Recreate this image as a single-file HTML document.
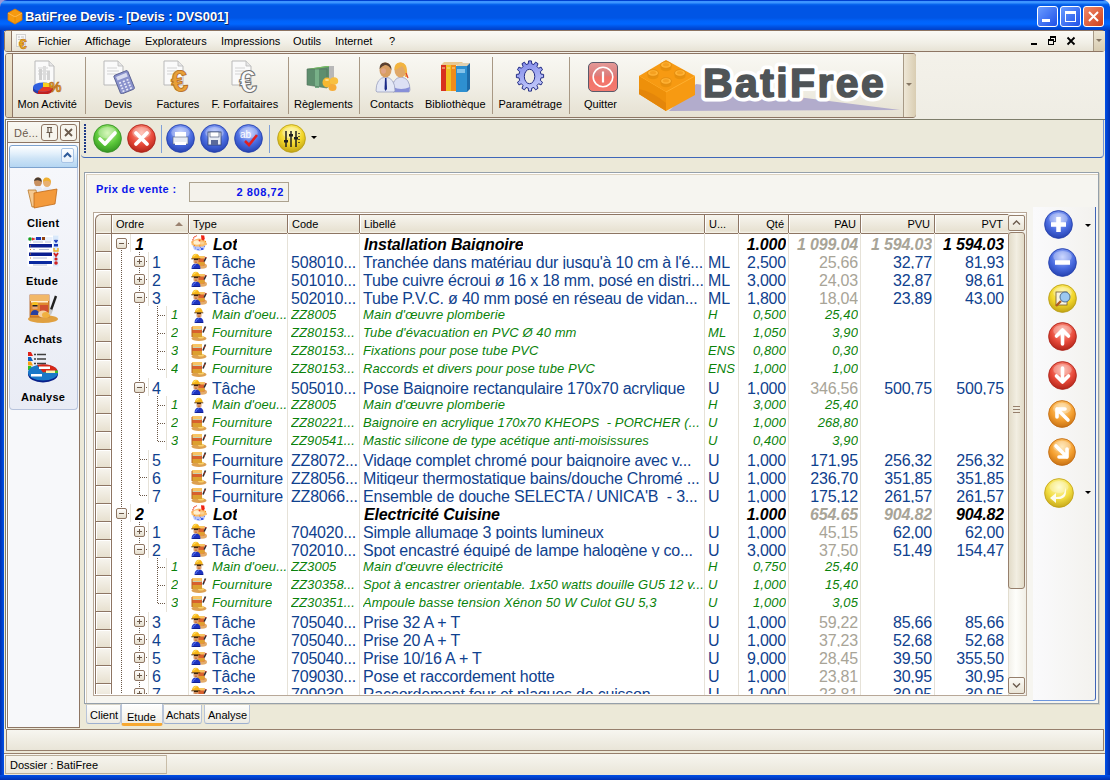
<!DOCTYPE html><html><head><meta charset="utf-8"><style>
*{margin:0;padding:0;box-sizing:border-box}
html,body{width:1110px;height:780px;overflow:hidden;background:#ECE9D8;font-family:"Liberation Sans", sans-serif;}
#root{position:absolute;left:0;top:0;width:1110px;height:780px;overflow:hidden;background:#ECE9D8}
.t11{font-size:11px;line-height:13px;color:#000}
.c{position:absolute;white-space:pre;overflow:hidden;height:17px}
.n15{font-size:16px;line-height:18px;padding-top:2px;letter-spacing:-0.2px}
.i12{font-size:13px;line-height:18px;padding-top:0px;font-style:italic;letter-spacing:0.1px}
.bi15{font-size:16px;line-height:18px;padding-top:2px;font-weight:bold;font-style:italic;letter-spacing:-0.15px}
.blue{color:#0F418E}
.green{color:#0A820A}
.gray{color:#A8A497}
.blk{color:#000}
</style></head><body><div id="root"><div style="position:absolute;left:0px;top:0px;width:1110px;height:780px;background:#0842D6;"></div>
<div style="position:absolute;left:0px;top:0px;width:8px;height:8px;background:#9A98D8;"></div>
<div style="position:absolute;left:1102px;top:0px;width:8px;height:8px;background:#F4F4F8;"></div>
<div style="position:absolute;left:4px;top:52px;width:1101px;height:723px;background:#ECE9D8;"></div>
<div style="position:absolute;left:4px;top:30px;width:1101px;height:89px;background:linear-gradient(180deg,#F5F3EC,#EFEDE4);"></div>
<div style="position:absolute;left:0px;top:0px;width:1110px;height:31px;border-radius:7px 7px 0 0;background:linear-gradient(180deg,#0040D0 0px,#0040D0 1px,#3D95FF 1px,#3D95FF 3px,#0A6AF0 4px,#0055E5 6px,#0055E5 18px,#0063FA 21px,#0066FF 24px,#0050E0 27px,#0040C8 30px);"></div>
<div style="position:absolute;left:1105px;top:30px;width:5px;height:750px;background:linear-gradient(90deg,#0050E8,#0030B0);"></div>
<div style="position:absolute;left:0px;top:30px;width:4px;height:750px;background:linear-gradient(90deg,#0030B0,#0050E8);"></div>
<div style="position:absolute;left:0px;top:775px;width:1110px;height:5px;background:linear-gradient(180deg,#0050E8,#0030B0);"></div>
<svg style="position:absolute;left:6px;top:7px" width="18" height="18" viewBox="0 0 18 18"><path d="M2 6 L9 2 L16 6 L16 13 L9 17 L2 13 Z" fill="#F59A10" stroke="#E07800" stroke-width="0.8"/><path d="M2 6 L9 10 L16 6" fill="none" stroke="#FFB84A" stroke-width="1"/><path d="M9 10 L9 17" stroke="#E08800" stroke-width="0.8"/></svg>
<div class="" style="position:absolute;left:25px;top:9px;white-space:pre;font-size:13px;line-height:16px;font-weight:bold;color:#fff;text-shadow:1px 1px 0 #0A246A;letter-spacing:-0.05px">BatiFree Devis - [Devis : DVS001]</div>
<div style="position:absolute;left:1037px;top:6px;width:21px;height:21px;border:1px solid #fff;border-radius:3px;background:linear-gradient(135deg,#6A9CFF,#1E50E8);overflow:hidden"><div style="position:absolute;left:4px;top:12px;width:8px;height:3px;background:#fff;"></div></div>
<div style="position:absolute;left:1060px;top:6px;width:21px;height:21px;border:1px solid #fff;border-radius:3px;background:linear-gradient(135deg,#6A9CFF,#1E50E8);overflow:hidden"><div style="position:absolute;left:4px;top:4px;width:11px;height:11px;border:1px solid #fff;border-top-width:3px;"></div></div>
<div style="position:absolute;left:1083px;top:6px;width:21px;height:21px;border:1px solid #fff;border-radius:3px;background:linear-gradient(135deg,#F08868,#D0401C);overflow:hidden"><svg style="position:absolute;left:4px;top:4px" width="11" height="11" viewBox="0 0 11 11"><path d="M1 1 L10 10 M10 1 L1 10" stroke="#fff" stroke-width="2"/></svg></div>
<div style="position:absolute;left:4px;top:30px;width:1101px;height:22px;background:linear-gradient(180deg,#FBFAF6,#F1EFE6 60%,#E7E3D5);border:1px solid #8D7563;border-radius:3px;"></div>
<div style="position:absolute;left:5px;top:31px;width:7px;height:20px;background:linear-gradient(180deg,#EFE6D2,#DCCFB2);border-right:1px solid #8D7563;border-radius:2px 0 0 2px;"></div>
<svg style="position:absolute;left:15px;top:33px" width="17" height="17" viewBox="0 0 17 17"><rect x="1.5" y="1.5" width="9" height="12" fill="#F8F8F8" stroke="#C8C8C8" stroke-width="0.8"/><path d="M3 4h2M6 4h3M3 6.5h6" stroke="#B8B8B8" stroke-width="0.8"/><text x="4" y="15.5" font-family="Liberation Sans" font-weight="bold" font-size="14" fill="#EBB020" stroke="#B86A10" stroke-width="0.5">€</text></svg>
<div class="t11" style="position:absolute;left:38px;top:35px;white-space:pre;">Fichier</div>
<div class="t11" style="position:absolute;left:85px;top:35px;white-space:pre;">Affichage</div>
<div class="t11" style="position:absolute;left:145px;top:35px;white-space:pre;">Explorateurs</div>
<div class="t11" style="position:absolute;left:221px;top:35px;white-space:pre;">Impressions</div>
<div class="t11" style="position:absolute;left:293px;top:35px;white-space:pre;">Outils</div>
<div class="t11" style="position:absolute;left:335px;top:35px;white-space:pre;">Internet</div>
<div class="t11" style="position:absolute;left:389px;top:35px;white-space:pre;">?</div>
<div style="position:absolute;left:1031px;top:43px;width:6px;height:2px;background:#000;"></div>
<div style="position:absolute;left:1048px;top:39px;width:6px;height:6px;border:1px solid #000;border-top-width:2px;background:#F0EEE6"></div>
<div style="position:absolute;left:1050px;top:36px;width:6px;height:6px;border:1px solid #000;border-top-width:2px;"></div>
<div style="position:absolute;left:1048px;top:39px;width:6px;height:6px;border:1px solid #000;border-top-width:2px;background:#F0EEE6"></div>
<svg style="position:absolute;left:1066px;top:36px" width="10" height="10" viewBox="0 0 10 10"><path d="M1.5 1.5 L8.5 8.5 M8.5 1.5 L1.5 8.5" stroke="#000" stroke-width="1.8"/></svg>
<div style="position:absolute;left:1093px;top:31px;width:12px;height:20px;background:linear-gradient(180deg,#EDE6D4,#D7CBB0);border-left:1px solid #A79A86;"></div>
<svg style="position:absolute;left:1095px;top:38px" width="8" height="6" viewBox="0 0 8 6"><path d="M1 1 L7 1 L4 4 Z" fill="#857663"/></svg>
<div style="position:absolute;left:5px;top:53px;width:911px;height:65px;background:linear-gradient(180deg,#F9F8F3,#F1EFE6 50%,#E6E1D2);border:1px solid #8D7563;border-radius:3px;"></div>
<div style="position:absolute;left:6px;top:54px;width:7px;height:63px;background:linear-gradient(180deg,#EFE6D2,#DCCFB2);border-right:1px solid #8D7563;border-radius:2px 0 0 2px;"></div>
<div style="position:absolute;left:903px;top:54px;width:13px;height:63px;background:linear-gradient(90deg,#EEE7D6,#D9CDB2);border-left:1px solid #A79A86;border-radius:0 3px 3px 0;"></div>
<svg style="position:absolute;left:905px;top:82px" width="8" height="6" viewBox="0 0 8 6"><path d="M1 1 L7 1 L4 4 Z" fill="#857663"/></svg>
<div style="position:absolute;left:85px;top:57px;width:1px;height:57px;background:#A89884;"></div>
<div style="position:absolute;left:288px;top:57px;width:1px;height:57px;background:#A89884;"></div>
<div style="position:absolute;left:359px;top:57px;width:1px;height:57px;background:#A89884;"></div>
<div style="position:absolute;left:492px;top:57px;width:1px;height:57px;background:#A89884;"></div>
<div style="position:absolute;left:569px;top:57px;width:1px;height:57px;background:#A89884;"></div>
<div class="t11" style="position:absolute;left:17.5px;top:98px;white-space:pre;">Mon Activité</div>
<div class="t11" style="position:absolute;left:104.5px;top:98px;white-space:pre;">Devis</div>
<div class="t11" style="position:absolute;left:156.5px;top:98px;white-space:pre;">Factures</div>
<div class="t11" style="position:absolute;left:211.5px;top:98px;white-space:pre;">F. Forfaitaires</div>
<div class="t11" style="position:absolute;left:294px;top:98px;white-space:pre;">Règlements</div>
<div class="t11" style="position:absolute;left:370px;top:98px;white-space:pre;">Contacts</div>
<div class="t11" style="position:absolute;left:425px;top:98px;white-space:pre;">Bibliothèque</div>
<div class="t11" style="position:absolute;left:498.5px;top:98px;white-space:pre;">Paramétrage</div>
<div class="t11" style="position:absolute;left:584px;top:98px;white-space:pre;">Quitter</div>
<svg style="position:absolute;left:30px;top:60px" width="34" height="34" viewBox="0 0 34 34"><path d="M5 1 h14 l5 5 v19 h-19 z" fill="#FAFAFA" stroke="#B9B9B9" stroke-width="1"/><path d="M19 1 v5 h5" fill="#E6E6E6" stroke="#B9B9B9" stroke-width="0.8"/><path d="M8 8 h10 M8 11 h12 M8 14 h12" stroke="#D2D2D2" stroke-width="1"/><rect x="9" y="9" width="3" height="11" fill="#D0D0D0"/><rect x="13" y="6" width="3" height="14" fill="#DCDCDC"/><rect x="17" y="11" width="3" height="9" fill="#D4D4D4"/><path d="M3 27 v3 A10 4.5 0 0 0 23 30 v-3Z" fill="#C02020"/><path d="M3 27 v3 A10 4.5 0 0 0 8 33.5 v-3Z" fill="#2040B0"/><ellipse cx="13" cy="27" rx="10" ry="4.5" fill="#3060E0"/><path d="M13 27 L23 27 A10 4.5 0 0 1 8 31Z" fill="#E83A28"/><path d="M13 27 L13 22.5 A10 4.5 0 0 1 23 27 Z" fill="#F8D020"/><text x="19" y="32" font-family="Liberation Sans" font-weight="bold" font-size="14" fill="#E89A30" stroke="#A86010" stroke-width="0.5">%</text></svg>
<svg style="position:absolute;left:101px;top:60px" width="36" height="34" viewBox="0 0 36 34"><path d="M3 1 h14 l5 5 v19 h-19 z" fill="#FAFAFA" stroke="#B9B9B9" stroke-width="1"/><path d="M17 1 v5 h5" fill="#E6E6E6" stroke="#B9B9B9" stroke-width="0.8"/><path d="M6 8 h10 M6 11 h12 M6 14 h12" stroke="#D2D2D2" stroke-width="1"/><g transform="rotate(-22 24 23)"><rect x="16" y="12" width="15" height="20" rx="1.5" fill="#8A92CC" stroke="#50588A" stroke-width="0.8"/><rect x="18" y="14" width="11" height="4" fill="#D8DCF0"/><path d="M18.5 21h2M22.5 21h2M26.5 21h2M18.5 24h2M22.5 24h2M26.5 24h2M18.5 27h2M22.5 27h2M26.5 27h2M18.5 30h2M22.5 30h2M26.5 30h2" stroke="#E8EAF8" stroke-width="1.6"/></g></svg>
<svg style="position:absolute;left:161px;top:60px" width="36" height="34" viewBox="0 0 36 34"><path d="M3 1 h14 l5 5 v19 h-19 z" fill="#FAFAFA" stroke="#B9B9B9" stroke-width="1"/><path d="M17 1 v5 h5" fill="#E6E6E6" stroke="#B9B9B9" stroke-width="0.8"/><path d="M6 8 h10 M6 11 h12 M6 14 h12" stroke="#D2D2D2" stroke-width="1"/><g transform="rotate(-8 22 21)"><text x="10" y="31" font-family="Liberation Sans" font-weight="bold" font-size="30" fill="#E8A038" stroke="#B06818" stroke-width="0.8">€</text></g></svg>
<svg style="position:absolute;left:229px;top:60px" width="36" height="34" viewBox="0 0 36 34"><path d="M3 1 h14 l5 5 v19 h-19 z" fill="#FAFAFA" stroke="#B9B9B9" stroke-width="1"/><path d="M17 1 v5 h5" fill="#E6E6E6" stroke="#B9B9B9" stroke-width="0.8"/><path d="M6 8 h10 M6 11 h12 M6 14 h12" stroke="#D2D2D2" stroke-width="1"/><g transform="rotate(-8 22 21)"><text x="10" y="32" font-family="Liberation Sans" font-weight="bold" font-size="31" fill="#FAFAFA" stroke="#707070" stroke-width="1">€</text></g></svg>
<svg style="position:absolute;left:305px;top:62px" width="36" height="30" viewBox="0 0 36 30"><path d="M2 7 L22 4 L29 4 L29 21 L22 26 L2 23Z" fill="#5E8E6E"/><path d="M2 7 L22 4 L29 4 L10 7Z" fill="#78C060"/><path d="M24 4 L29 4 L29 21 L24 24Z" fill="#B8B8B8"/><rect x="10" y="7" width="4" height="19" fill="#78B088"/><path d="M2 7 h20 v19 l-20 -3z" fill="none" stroke="#50705A" stroke-width="0.6"/><ellipse cx="22" cy="20.5" rx="4.5" ry="5" fill="#F8B830"/><ellipse cx="29" cy="19" rx="4.2" ry="3.8" fill="#F8C040"/><ellipse cx="27.5" cy="25.5" rx="4" ry="3.5" fill="#F6AC38"/><ellipse cx="22" cy="18" rx="2" ry="1" fill="#FFF0B0" opacity="0.7"/></svg>
<svg style="position:absolute;left:375px;top:61px" width="36" height="32" viewBox="0 0 36 32"><path d="M17 30 Q17 17 26 16 Q35 17 35 29 L34 31 L18 31Z" fill="#DCE0F4" stroke="#9096B8" stroke-width="0.7"/><path d="M18 26 Q26 30 35 26 L34 31 L18 31Z" fill="#8890D8"/><ellipse cx="25.5" cy="9" rx="6" ry="7.5" fill="#E0A868"/><path d="M19.5 9 Q19 1 26 1.5 Q32 2 32 10 Q32 14 33 16 L30 16 Q31 9 27 5 Q23 8 19.5 9Z" fill="#F2B440"/><path d="M31 12 L33 17" stroke="#E04030" stroke-width="1.2"/><path d="M1 30 Q1 17 10.5 16 Q20 17 20 30 L19 31 L2 31Z" fill="#E4E8F6" stroke="#9096B8" stroke-width="0.7"/><path d="M10 17 L11.5 17 L12 28 L10.5 30 L9.5 28Z" fill="#1A2A88"/><ellipse cx="10.5" cy="9" rx="6" ry="7.5" fill="#D89E62"/><path d="M4.5 8 Q4.5 1 10.5 1.5 Q16.5 2 16.5 9 Q14 4 10 4 Q7 5 4.5 8Z" fill="#5A4030"/><ellipse cx="8.5" cy="10" rx="2.5" ry="2.8" fill="#E8A8A0" opacity="0.6"/></svg>
<svg style="position:absolute;left:439px;top:60px" width="32" height="34" viewBox="0 0 32 34"><rect x="2" y="5" width="5" height="26" fill="#D8301E"/><rect x="7" y="4" width="5" height="27" fill="#F0C020"/><rect x="12" y="4" width="5" height="27" fill="#F08C1A"/><path d="M2 5 L5 2 L24 2 L21 5 Z" fill="#E8C890"/><rect x="17" y="6" width="11" height="26" fill="#2E90D0"/><path d="M17 6 L21 3 L31 3 L28 6 Z" fill="#E0D0B0"/><path d="M28 6 L31 3 L31 29 L28 32 Z" fill="#1C6AA8"/><rect x="18" y="9" width="8" height="4" fill="#9AD0F0" opacity="0.8"/><path d="M3 8h3M8 8h3M13 8h3" stroke="#F8E0A0" stroke-width="1.2"/></svg>
<svg style="position:absolute;left:514px;top:60px" width="32" height="32" viewBox="0 0 32 32"><defs><linearGradient id="gearg" x1="0" y1="0" x2="0.3" y2="1"><stop offset="0" stop-color="#7C84E8"/><stop offset="1" stop-color="#C0C8FA"/></linearGradient></defs><g transform="translate(16 16) scale(0.9 1)"><polygon points="-1.92,-12.15 -1.59,-15.12 1.59,-15.12 1.92,-12.15 4.41,-11.48 6.18,-13.89 8.93,-12.30 7.74,-9.56 9.56,-7.74 12.30,-8.93 13.89,-6.18 11.48,-4.41 12.15,-1.92 15.12,-1.59 15.12,1.59 12.15,1.92 11.48,4.41 13.89,6.18 12.30,8.93 9.56,7.74 7.74,9.56 8.93,12.30 6.18,13.89 4.41,11.48 1.92,12.15 1.59,15.12 -1.59,15.12 -1.92,12.15 -4.41,11.48 -6.18,13.89 -8.93,12.30 -7.74,9.56 -9.56,7.74 -12.30,8.93 -13.89,6.18 -11.48,4.41 -12.15,1.92 -15.12,1.59 -15.12,-1.59 -12.15,-1.92 -11.48,-4.41 -13.89,-6.18 -12.30,-8.93 -9.56,-7.74 -7.74,-9.56 -8.93,-12.30 -6.18,-13.89 -4.41,-11.48" fill="url(#gearg)" stroke="#1C2680" stroke-width="1"/><ellipse cx="-0.5" cy="0.5" rx="5.8" ry="7.2" fill="#EFECE2" stroke="#1C2680" stroke-width="1"/></g></svg>
<svg style="position:absolute;left:587px;top:61px" width="32" height="32" viewBox="0 0 32 32"><defs><linearGradient id="qg" x1="0" y1="0" x2="0" y2="1"><stop offset="0" stop-color="#E49A98"/><stop offset="0.45" stop-color="#DC7C7A"/><stop offset="0.5" stop-color="#F07268"/><stop offset="1" stop-color="#F47A70"/></linearGradient></defs><rect x="1.5" y="1.5" width="29" height="29" rx="4.5" fill="url(#qg)" stroke="#5A5A6A" stroke-width="1"/><circle cx="16" cy="16" r="9.8" fill="none" stroke="#FFFFFF" stroke-width="1.6"/><path d="M16 10.5 v11" stroke="#FFFFFF" stroke-width="2.2"/></svg>
<svg style="position:absolute;left:636px;top:57px" width="265" height="57" viewBox="0 0 265 57"><path d="M33 54 L60 27 L264 53 L33 54 Z" fill="#B2ACCC"/><path d="M3 19 L30 3 L59 19 L59 38 L30 54 L3 37 Z" fill="#F79A12"/><path d="M3 19 L30 35 L59 19" fill="none" stroke="#FFB030" stroke-width="1"/><path d="M3 19 L30 35 L30 54 L3 37 Z" fill="#EE900A"/><path d="M3 32 Q15 34 30 46 L30 54 L3 37Z" fill="#E0820A" opacity="0.7"/><path d="M24.5 8 v3 a5.5 3.3 0 0 0 11 0 v-3Z" fill="#E8900C"/><ellipse cx="30" cy="8" rx="5.5" ry="3.3" fill="#FFB233" stroke="#E08A10" stroke-width="0.8"/><ellipse cx="30" cy="7.7" rx="3" ry="1.6" fill="#F5A020"/><path d="M11.5 16 v3 a5.5 3.3 0 0 0 11 0 v-3Z" fill="#E8900C"/><ellipse cx="17" cy="16" rx="5.5" ry="3.3" fill="#FFB233" stroke="#E08A10" stroke-width="0.8"/><ellipse cx="17" cy="15.7" rx="3" ry="1.6" fill="#F5A020"/><path d="M38.5 16 v3 a5.5 3.3 0 0 0 11 0 v-3Z" fill="#E8900C"/><ellipse cx="44" cy="16" rx="5.5" ry="3.3" fill="#FFB233" stroke="#E08A10" stroke-width="0.8"/><ellipse cx="44" cy="15.7" rx="3" ry="1.6" fill="#F5A020"/><path d="M24.5 24 v3 a5.5 3.3 0 0 0 11 0 v-3Z" fill="#E8900C"/><ellipse cx="30" cy="24" rx="5.5" ry="3.3" fill="#FFB233" stroke="#E08A10" stroke-width="0.8"/><ellipse cx="30" cy="23.7" rx="3" ry="1.6" fill="#F5A020"/><text x="67" y="40" font-family="Liberation Sans" font-weight="bold" font-size="41" letter-spacing="2.4" fill="#4F5457" stroke="#fff" stroke-width="9" stroke-linejoin="round">BatiFree</text><text x="67" y="40" font-family="Liberation Sans" font-weight="bold" font-size="41" letter-spacing="2.4" fill="#4F5457" stroke="#4F5457" stroke-width="1.6" stroke-linejoin="round">BatiFree</text></svg>
<div style="position:absolute;left:5px;top:119px;width:76px;height:610px;border-left:1px solid #7D7D6A;border-top:1px solid #7D7D6A;box-shadow:inset 1px 1px 0 #fff;"></div>
<div style="position:absolute;left:7px;top:121px;width:73px;height:607px;background:#F7F8FA;border:1px solid #8D7563;box-shadow:inset 1px 1px 0 #fff;"></div>
<div style="position:absolute;left:8px;top:122px;width:71px;height:21px;background:linear-gradient(180deg,#F9F8F3,#EEEBE0);border-bottom:1px solid #8D7563;"></div>
<div class="t11" style="position:absolute;left:14px;top:127px;white-space:pre;color:#6A5A4C;font-size:11px;letter-spacing:0.2px">Dé...</div>
<div style="position:absolute;left:41px;top:124px;width:17px;height:17px;border:1px solid #8D7563;border-radius:3px;background:#F7F5EE;"></div>
<svg style="position:absolute;left:43px;top:126px" width="13" height="13" viewBox="0 0 13 13"><path d="M4 1.5 h5 M5 1.5 v5 M8 1.5 v5 M3.5 6.5 h6 M6.5 6.5 v5" stroke="#6A5A4C" stroke-width="1.2" fill="none"/></svg>
<div style="position:absolute;left:60px;top:124px;width:17px;height:17px;border:1px solid #8D7563;border-radius:3px;background:#F7F5EE;"></div>
<svg style="position:absolute;left:62px;top:126px" width="13" height="13" viewBox="0 0 13 13"><path d="M3 3 L10 10 M10 3 L3 10" stroke="#6A5A4C" stroke-width="1.8"/></svg>
<div style="position:absolute;left:9px;top:145px;width:69px;height:23px;border:1px solid #7DA2CE;border-radius:3px 3px 0 0;background:linear-gradient(180deg,#FFFFFF 0%,#E3F0FB 35%,#CDE3F6 60%,#B5D6F2 100%);"></div>
<div style="position:absolute;left:61px;top:148px;width:13px;height:15px;border:1px solid #A8C4E6;border-radius:2px;background:linear-gradient(180deg,#FDFEFF,#E6F0FA);"></div>
<svg style="position:absolute;left:62px;top:151px" width="11" height="8" viewBox="0 0 11 8"><path d="M2 6 L5.5 2.5 L9 6" stroke="#2E5A9A" stroke-width="2" fill="none"/></svg>
<div style="position:absolute;left:9px;top:168px;width:69px;height:242px;background:linear-gradient(180deg,#F6F7FB,#E9ECF5);border:1px solid #B7C3DC;border-top:none;border-radius:0 0 4px 4px;"></div>
<div class="t11" style="position:absolute;left:27px;top:217px;white-space:pre;font-weight:bold;letter-spacing:0.3px">Client</div>
<div class="t11" style="position:absolute;left:26px;top:275px;white-space:pre;font-weight:bold;letter-spacing:0.3px">Etude</div>
<div class="t11" style="position:absolute;left:24px;top:333px;white-space:pre;font-weight:bold;letter-spacing:0.3px">Achats</div>
<div class="t11" style="position:absolute;left:21px;top:391px;white-space:pre;font-weight:bold;letter-spacing:0.3px">Analyse</div>
<svg style="position:absolute;left:26px;top:176px" width="34" height="34" viewBox="0 0 34 34"><ellipse cx="12" cy="6" rx="4" ry="4.5" fill="#C89060"/><path d="M8 5 Q9 1 12.5 1.5 Q16 2 15.5 6 Q13 3 8 5Z" fill="#4A3C30"/><ellipse cx="21" cy="6.5" rx="4" ry="4.5" fill="#E8B070"/><path d="M17 6 Q17 1 21 1.5 Q25 2 25 7 Q22 3 17 6Z" fill="#F0B030"/><path d="M6 18 Q7 10 12 10 Q17 10 17 18Z" fill="#E8ECF6"/><path d="M15 18 Q16 11 21 11 Q26 11 27 18Z" fill="#E8ECF6"/><path d="M2 14 L10 14 L13 30 L6 31 Z" fill="#F5C890" stroke="#B8782A" stroke-width="0.8"/><path d="M8 17 L31 13 L29 28 L8 32 Z" fill="#F39A3C" stroke="#C06A18" stroke-width="0.8"/></svg>
<svg style="position:absolute;left:27px;top:235px" width="32" height="32" viewBox="0 0 32 32"><rect x="0.5" y="0.5" width="31" height="31" fill="#FFFFFF"/><rect x="26" y="0.5" width="5.5" height="31" fill="#D8E8FA"/><rect x="0.5" y="2" width="25" height="4" fill="#E8F0FC"/><circle cx="3" cy="4" r="1.8" fill="#18A018"/><path d="M5 2.5 L9 4 L5 5.5Z" fill="#E02828"/><rect x="9" y="2" width="5" height="3" fill="#1838B8"/><rect x="15" y="2" width="3" height="3" fill="#904010"/><rect x="2" y="9" width="23" height="3.5" fill="#0A1E90"/><rect x="2" y="17.5" width="23" height="3.5" fill="#0A1E90"/><rect x="2" y="26" width="23" height="3" fill="#0A2AA0"/><path d="M3 7h1M6 7h10M18 7h6M6 14.5h2M12 14.5h10M6 23h14M6 30h14" stroke="#B8C0D8" stroke-width="1"/><path d="M3 11h1M3 14.5h1M3 19h1M3 23h1" stroke="#D08030" stroke-width="1.2"/><path d="M27.5 5 L29 7 L30.5 5" stroke="#1838B8" stroke-width="1.6" fill="none"/><rect x="27" y="9" width="4" height="2.5" fill="#1838B8"/><path d="M27 13 v3 h4 v-3" stroke="#F0B020" stroke-width="1.4" fill="none"/><path d="M27 18 L29 21 L31 18" stroke="#D02020" stroke-width="1.8" fill="none"/><circle cx="29" cy="24" r="1.6" fill="#D02020"/><circle cx="29" cy="28" r="1.8" fill="#D02020"/></svg>
<svg style="position:absolute;left:27px;top:293px" width="32" height="31" viewBox="0 0 32 31"><ellipse cx="16" cy="26" rx="15" ry="4" fill="#E0A040"/><rect x="3" y="2" width="19" height="22" fill="#E08A30" stroke="#B05A18" stroke-width="0.8"/><rect x="3" y="2" width="19" height="6" fill="#F2B868"/><rect x="4" y="8" width="17" height="1.5" fill="#FFF0D0"/><ellipse cx="8" cy="11" rx="3.2" ry="2" fill="#F4C020"/><rect x="5.5" y="12" width="5" height="4" fill="#E8A878"/><rect x="5.5" y="12" width="5" height="1.5" fill="#202020"/><path d="M3.5 22 Q4 17 8 17 Q12 17 12.5 22Z" fill="#2840A0"/><rect x="13" y="12" width="8" height="7" fill="#D05030"/><ellipse cx="16" cy="21" rx="5" ry="3.5" fill="#F4D0A0"/><ellipse cx="19" cy="22" rx="4" ry="3" fill="#F0B040"/><path d="M29 3 L24 17" stroke="#202020" stroke-width="2.4"/><path d="M23 16 L26 17 L24 22 L21.5 21Z" fill="#C8C8C8"/></svg>
<svg style="position:absolute;left:27px;top:351px" width="32" height="32" viewBox="0 0 32 32"><path d="M1 1 h3 l2 4 h-5Z" fill="#E02018"/><path d="M1 6 h3 l2 4 h-5Z" fill="#1060C0"/><path d="M1 10.5 h3 l2 4 h-5Z" fill="#F8A010"/><path d="M1 15 h3 l2 4 h-5Z" fill="#30C020"/><path d="M7 3.5h2M10 3.5h9M7 8h2M10 8h9M7 12.5h2M10 12.5h9" stroke="#404040" stroke-width="1.4"/><ellipse cx="16" cy="23" rx="15" ry="8.5" fill="#08208A"/><ellipse cx="16" cy="21.5" rx="15" ry="8" fill="#1878C8"/><path d="M16 21.5 L10 13.8 A15 8 0 0 1 30.5 19.5 Z" fill="#D82818"/><path d="M16 21.5 L30.5 19.5 A15 8 0 0 1 31 22 Z" fill="#40C020"/><rect x="12" y="15.5" width="11" height="2.5" fill="#fff"/><rect x="19" y="19.5" width="9" height="2.5" fill="#F8F0B0"/><rect x="4" y="23" width="11" height="2.5" fill="#fff"/></svg>
<div style="position:absolute;left:5px;top:119px;width:1100px;height:1px;background:#7D7D6A;"></div>
<div style="position:absolute;left:81px;top:120px;width:1023px;height:38px;background:#EBE9DA;border-bottom:1px solid #3E66B8;border-right:1px solid #6F92D8;border-radius:0 0 4px 4px;"></div>
<div style="position:absolute;left:84px;top:124px;width:2px;height:2px;background:#1F3A88;"></div>
<div style="position:absolute;left:84px;top:127px;width:2px;height:2px;background:#1F3A88;"></div>
<div style="position:absolute;left:84px;top:130px;width:2px;height:2px;background:#1F3A88;"></div>
<div style="position:absolute;left:84px;top:133px;width:2px;height:2px;background:#1F3A88;"></div>
<div style="position:absolute;left:84px;top:136px;width:2px;height:2px;background:#1F3A88;"></div>
<div style="position:absolute;left:84px;top:139px;width:2px;height:2px;background:#1F3A88;"></div>
<div style="position:absolute;left:84px;top:142px;width:2px;height:2px;background:#1F3A88;"></div>
<div style="position:absolute;left:84px;top:145px;width:2px;height:2px;background:#1F3A88;"></div>
<div style="position:absolute;left:84px;top:148px;width:2px;height:2px;background:#1F3A88;"></div>
<div style="position:absolute;left:84px;top:151px;width:2px;height:2px;background:#1F3A88;"></div>
<svg style="position:absolute;left:93px;top:124px" width="29" height="29" viewBox="0 0 29 29"><defs><radialGradient id="o1" cx="50%" cy="30%" r="75%"><stop offset="0" stop-color="#C8F5A0"/><stop offset="0.55" stop-color="#5CC83A"/><stop offset="1" stop-color="#2E8A1E"/></radialGradient></defs><circle cx="14.5" cy="14.5" r="13.9" fill="url(#o1)" stroke="#2E8A1E" stroke-width="0.8"/><ellipse cx="14.5" cy="8.7" rx="9.28" ry="5.800000000000001" fill="#fff" opacity="0.28"/><path d="M7 15 L12 20 L22 9" stroke="#fff" stroke-width="3.6" fill="none" stroke-linecap="round" stroke-linejoin="round"/></svg>
<svg style="position:absolute;left:127px;top:124px" width="29" height="29" viewBox="0 0 29 29"><defs><radialGradient id="o2" cx="50%" cy="30%" r="75%"><stop offset="0" stop-color="#FFB0A0"/><stop offset="0.55" stop-color="#E84A3A"/><stop offset="1" stop-color="#A81E14"/></radialGradient></defs><circle cx="14.5" cy="14.5" r="13.9" fill="url(#o2)" stroke="#A81E14" stroke-width="0.8"/><ellipse cx="14.5" cy="8.7" rx="9.28" ry="5.800000000000001" fill="#fff" opacity="0.28"/><path d="M9 9 L20 20 M20 9 L9 20" stroke="#fff" stroke-width="3.8" stroke-linecap="round"/></svg>
<div style="position:absolute;left:161px;top:125px;width:1px;height:28px;background:#7FA0D8;"></div>
<svg style="position:absolute;left:166px;top:124px" width="29" height="29" viewBox="0 0 29 29"><defs><radialGradient id="o3" cx="50%" cy="30%" r="75%"><stop offset="0" stop-color="#B8C8FF"/><stop offset="0.55" stop-color="#4A6CE0"/><stop offset="1" stop-color="#1E3AA8"/></radialGradient></defs><circle cx="14.5" cy="14.5" r="13.9" fill="url(#o3)" stroke="#1E3AA8" stroke-width="0.8"/><ellipse cx="14.5" cy="8.7" rx="9.28" ry="5.800000000000001" fill="#fff" opacity="0.28"/><rect x="9" y="8" width="11" height="5" fill="#fff"/><rect x="7" y="13" width="15" height="7" fill="#E8ECF4" stroke="#50607A" stroke-width="0.6"/><rect x="9" y="18" width="11" height="3" fill="#fff"/></svg>
<svg style="position:absolute;left:200px;top:124px" width="29" height="29" viewBox="0 0 29 29"><defs><radialGradient id="o4" cx="50%" cy="30%" r="75%"><stop offset="0" stop-color="#B8C8FF"/><stop offset="0.55" stop-color="#4A6CE0"/><stop offset="1" stop-color="#1E3AA8"/></radialGradient></defs><circle cx="14.5" cy="14.5" r="13.9" fill="url(#o4)" stroke="#1E3AA8" stroke-width="0.8"/><ellipse cx="14.5" cy="8.7" rx="9.28" ry="5.800000000000001" fill="#fff" opacity="0.28"/><rect x="8" y="8" width="13" height="13" fill="#E8ECF4" stroke="#30406A" stroke-width="0.8"/><rect x="10" y="8" width="9" height="5" fill="#fff" stroke="#30406A" stroke-width="0.6"/><rect x="11" y="16" width="7" height="5" fill="#5A6A9A"/></svg>
<svg style="position:absolute;left:234px;top:124px" width="29" height="29" viewBox="0 0 29 29"><defs><radialGradient id="o5" cx="50%" cy="30%" r="75%"><stop offset="0" stop-color="#B8C8FF"/><stop offset="0.55" stop-color="#4A6CE0"/><stop offset="1" stop-color="#1E3AA8"/></radialGradient></defs><circle cx="14.5" cy="14.5" r="13.9" fill="url(#o5)" stroke="#1E3AA8" stroke-width="0.8"/><ellipse cx="14.5" cy="8.7" rx="9.28" ry="5.800000000000001" fill="#fff" opacity="0.28"/><text x="6" y="14" font-family="Liberation Sans" font-size="10" fill="#fff">ab</text><path d="M11 17 L15 21 L23 11" stroke="#E02020" stroke-width="2.6" fill="none"/></svg>
<div style="position:absolute;left:269px;top:125px;width:1px;height:28px;background:#7FA0D8;"></div>
<svg style="position:absolute;left:277px;top:124px" width="29" height="29" viewBox="0 0 29 29"><defs><radialGradient id="o6" cx="50%" cy="30%" r="75%"><stop offset="0" stop-color="#FFF8A0"/><stop offset="0.55" stop-color="#F2D62A"/><stop offset="1" stop-color="#B89A10"/></radialGradient></defs><circle cx="14.5" cy="14.5" r="13.9" fill="url(#o6)" stroke="#B89A10" stroke-width="0.8"/><ellipse cx="14.5" cy="8.7" rx="9.28" ry="5.800000000000001" fill="#fff" opacity="0.28"/><path d="M9 7v16M14 7v16M19 7v16" stroke="#202020" stroke-width="1.5"/><rect x="7" y="16" width="4" height="2.5" fill="#202020"/><rect x="12" y="10" width="4" height="2.5" fill="#202020"/><rect x="17" y="13" width="4" height="2.5" fill="#202020"/><path d="M22 9v1M22 12v1M22 15v1M22 18v1" stroke="#202020" stroke-width="1.4"/></svg>
<svg style="position:absolute;left:311px;top:136px" width="7" height="4" viewBox="0 0 7 4"><path d="M0 0 L6 0 L3 3Z" fill="#000"/></svg>
<div style="position:absolute;left:84px;top:172px;width:1015px;height:532px;background:#F6F5F0;border:1px solid #95A0AA;box-shadow:inset 1px 1px 0 #fff, inset 2px 2px 0 #DCD2C0, 1px 1px 0 #D6D2C4;"></div>
<div class="t11" style="position:absolute;left:96px;top:183px;white-space:pre;font-weight:bold;color:#0A16EA;letter-spacing:0.35px">Prix de vente :</div>
<div style="position:absolute;left:189px;top:182px;width:100px;height:20px;background:#F4F2EB;border:1px solid #ACA28F;"></div>
<div class="t11" style="position:absolute;left:190px;top:186px;white-space:pre;width:94px;text-align:right;font-weight:bold;color:#0A16EA;letter-spacing:0.6px">2 808,72</div>
<div style="position:absolute;left:1033px;top:207px;width:63px;height:494px;background:linear-gradient(90deg,#FAFAFC,#F3F2EE);border-right:1px solid #3F64B8;border-bottom:1px solid #6D96DE;border-radius:0 0 3px 0;"></div>
<svg style="position:absolute;left:1044px;top:210px" width="29" height="29" viewBox="0 0 29 29"><defs><radialGradient id="p1" cx="50%" cy="30%" r="75%"><stop offset="0" stop-color="#B8C8FF"/><stop offset="0.55" stop-color="#4A6CE0"/><stop offset="1" stop-color="#1E3AA8"/></radialGradient></defs><circle cx="14.5" cy="14.5" r="13.9" fill="url(#p1)" stroke="#1E3AA8" stroke-width="0.8"/><ellipse cx="14.5" cy="8.7" rx="9.28" ry="5.800000000000001" fill="#fff" opacity="0.28"/><path d="M14.5 7 v15 M7 14.5 h15" stroke="#fff" stroke-width="4.5"/></svg>
<svg style="position:absolute;left:1085px;top:224px" width="7" height="4" viewBox="0 0 7 4"><path d="M0 0 L6 0 L3 3Z" fill="#000"/></svg>
<svg style="position:absolute;left:1048px;top:248px" width="29" height="29" viewBox="0 0 29 29"><defs><radialGradient id="p2" cx="50%" cy="30%" r="75%"><stop offset="0" stop-color="#B8C8FF"/><stop offset="0.55" stop-color="#4A6CE0"/><stop offset="1" stop-color="#1E3AA8"/></radialGradient></defs><circle cx="14.5" cy="14.5" r="13.9" fill="url(#p2)" stroke="#1E3AA8" stroke-width="0.8"/><ellipse cx="14.5" cy="8.7" rx="9.28" ry="5.800000000000001" fill="#fff" opacity="0.28"/><path d="M7 14.5 h15" stroke="#fff" stroke-width="4.5"/></svg>
<svg style="position:absolute;left:1048px;top:284px" width="29" height="29" viewBox="0 0 29 29"><defs><radialGradient id="p3" cx="50%" cy="30%" r="75%"><stop offset="0" stop-color="#FFF8A0"/><stop offset="0.55" stop-color="#F2D62A"/><stop offset="1" stop-color="#B89A10"/></radialGradient></defs><circle cx="14.5" cy="14.5" r="13.9" fill="url(#p3)" stroke="#B89A10" stroke-width="0.8"/><ellipse cx="14.5" cy="8.7" rx="9.28" ry="5.800000000000001" fill="#fff" opacity="0.28"/><rect x="8" y="8" width="11" height="13" fill="#F8F4E0" stroke="#705A30" stroke-width="0.8"/><circle cx="17" cy="13" r="5" fill="#9CC8F0" stroke="#507090" stroke-width="1"/><path d="M13 17 L8 22" stroke="#B05A20" stroke-width="2.4"/></svg>
<svg style="position:absolute;left:1048px;top:322px" width="29" height="29" viewBox="0 0 29 29"><defs><radialGradient id="p4" cx="50%" cy="30%" r="75%"><stop offset="0" stop-color="#FFB0A0"/><stop offset="0.55" stop-color="#E84A3A"/><stop offset="1" stop-color="#A81E14"/></radialGradient></defs><circle cx="14.5" cy="14.5" r="13.9" fill="url(#p4)" stroke="#A81E14" stroke-width="0.8"/><ellipse cx="14.5" cy="8.7" rx="9.28" ry="5.800000000000001" fill="#fff" opacity="0.28"/><path d="M14.5 22 V8 M8.5 14 L14.5 8 L20.5 14" stroke="#fff" stroke-width="3.6" fill="none" stroke-linecap="round" stroke-linejoin="round"/></svg>
<svg style="position:absolute;left:1048px;top:361px" width="29" height="29" viewBox="0 0 29 29"><defs><radialGradient id="p5" cx="50%" cy="30%" r="75%"><stop offset="0" stop-color="#FFB0A0"/><stop offset="0.55" stop-color="#E84A3A"/><stop offset="1" stop-color="#A81E14"/></radialGradient></defs><circle cx="14.5" cy="14.5" r="13.9" fill="url(#p5)" stroke="#A81E14" stroke-width="0.8"/><ellipse cx="14.5" cy="8.7" rx="9.28" ry="5.800000000000001" fill="#fff" opacity="0.28"/><path d="M14.5 7 V21 M8.5 15 L14.5 21 L20.5 15" stroke="#fff" stroke-width="3.6" fill="none" stroke-linecap="round" stroke-linejoin="round"/></svg>
<svg style="position:absolute;left:1048px;top:400px" width="28" height="28" viewBox="0 0 28 28"><defs><radialGradient id="p6" cx="50%" cy="30%" r="75%"><stop offset="0" stop-color="#FFE0A0"/><stop offset="0.55" stop-color="#F5A030"/><stop offset="1" stop-color="#C06A10"/></radialGradient></defs><circle cx="14.0" cy="14.0" r="13.4" fill="url(#p6)" stroke="#C06A10" stroke-width="0.8"/><ellipse cx="14.0" cy="8.4" rx="8.96" ry="5.6000000000000005" fill="#fff" opacity="0.28"/><path d="M20 20 L9 9 M9 17 V9 H17" stroke="#fff" stroke-width="3.6" fill="none" stroke-linecap="round" stroke-linejoin="round"/></svg>
<svg style="position:absolute;left:1048px;top:438px" width="28" height="28" viewBox="0 0 28 28"><defs><radialGradient id="p7" cx="50%" cy="30%" r="75%"><stop offset="0" stop-color="#FFE0A0"/><stop offset="0.55" stop-color="#F5A030"/><stop offset="1" stop-color="#C06A10"/></radialGradient></defs><circle cx="14.0" cy="14.0" r="13.4" fill="url(#p7)" stroke="#C06A10" stroke-width="0.8"/><ellipse cx="14.0" cy="8.4" rx="8.96" ry="5.6000000000000005" fill="#fff" opacity="0.28"/><path d="M8 8 L19 19 M19 11 V19 H11" stroke="#fff" stroke-width="3.6" fill="none" stroke-linecap="round" stroke-linejoin="round"/></svg>
<svg style="position:absolute;left:1044px;top:478px" width="30" height="30" viewBox="0 0 30 30"><defs><radialGradient id="p8" cx="50%" cy="30%" r="75%"><stop offset="0" stop-color="#FFFCC0"/><stop offset="0.55" stop-color="#F2DC40"/><stop offset="1" stop-color="#C0A014"/></radialGradient></defs><circle cx="15.0" cy="15.0" r="14.4" fill="url(#p8)" stroke="#C0A014" stroke-width="0.8"/><ellipse cx="15.0" cy="9.0" rx="9.6" ry="6.0" fill="#fff" opacity="0.28"/><path d="M21 9 Q22 19 12 19 L12 15 L6 20 L12 25 L12 21 Q25 22 21 9Z" fill="#fff" opacity="0.9"/></svg>
<svg style="position:absolute;left:1085px;top:491px" width="7" height="4" viewBox="0 0 7 4"><path d="M0 0 L6 0 L3 3Z" fill="#000"/></svg>
<div style="position:absolute;left:86px;width:35px;height:19px;top:705px;border-bottom:1px solid #9DB0D0;background:linear-gradient(180deg,#FDFDFB,#EDEBE3);border-left:1px solid #B8C4D8;border-right:1px solid #B8C4D8;border-radius:0 0 3px 3px;"></div>
<div style="position:absolute;left:163px;width:39px;height:19px;top:705px;border-bottom:1px solid #9DB0D0;background:linear-gradient(180deg,#FDFDFB,#EDEBE3);border-left:1px solid #B8C4D8;border-right:1px solid #B8C4D8;border-radius:0 0 3px 3px;"></div>
<div style="position:absolute;left:204px;width:46px;height:19px;top:705px;border-bottom:1px solid #9DB0D0;background:linear-gradient(180deg,#FDFDFB,#EDEBE3);border-left:1px solid #B8C4D8;border-right:1px solid #B8C4D8;border-radius:0 0 3px 3px;"></div>
<div style="position:absolute;left:121px;width:42px;border-bottom:3px solid #F7A830;height:22px;top:704px;background:linear-gradient(180deg,#FFFFFF,#F1EFE6);border-left:1px solid #B8C4D8;border-right:1px solid #B8C4D8;border-radius:0 0 3px 3px;"></div>
<div class="t11" style="position:absolute;left:90px;top:709px;white-space:pre;">Client</div>
<div class="t11" style="position:absolute;left:127px;top:711px;white-space:pre;">Etude</div>
<div class="t11" style="position:absolute;left:166px;top:709px;white-space:pre;">Achats</div>
<div class="t11" style="position:absolute;left:208px;top:709px;white-space:pre;">Analyse</div>
<div style="position:absolute;left:6px;top:729px;width:1098px;height:22px;background:linear-gradient(180deg,#F7F6F0,#E9E5D8);border:1px solid #967F6C;"></div>
<div style="position:absolute;left:4px;top:753px;width:1101px;height:22px;background:linear-gradient(180deg,#F7F6F0,#E9E5D8);border-top:1px solid #967F6C;"></div>
<div style="position:absolute;left:5px;top:755px;width:162px;height:19px;border:1px solid #B9AD98;border-right-color:#C8BDA8;"></div>
<div class="t11" style="position:absolute;left:10px;top:759px;white-space:pre;">Dossier : BatiFree</div>
<div style="position:absolute;left:93px;top:212px;width:934px;height:484px;background:#FFFFFF;border:1px solid #B8A898;"></div>
<div style="position:absolute;left:95px;top:214px;width:913px;height:20px;background:linear-gradient(180deg,#F7F5EE,#EFEBE0 45%,#E7E1D1 90%,#F4F1E6 95%);border-top:1px solid #8D7563;border-left:1px solid #8D7563;border-bottom:1px solid #8D7563;border-radius:6px 0 0 0;"></div>
<div style="position:absolute;left:111px;top:214px;width:1px;height:19px;background:#8D7563;"></div>
<div style="position:absolute;left:112px;top:215px;width:1px;height:17px;background:#FFFFFF;"></div>
<div style="position:absolute;left:188px;top:214px;width:1px;height:19px;background:#8D7563;"></div>
<div style="position:absolute;left:189px;top:215px;width:1px;height:17px;background:#FFFFFF;"></div>
<div style="position:absolute;left:287px;top:214px;width:1px;height:19px;background:#8D7563;"></div>
<div style="position:absolute;left:288px;top:215px;width:1px;height:17px;background:#FFFFFF;"></div>
<div style="position:absolute;left:359px;top:214px;width:1px;height:19px;background:#8D7563;"></div>
<div style="position:absolute;left:360px;top:215px;width:1px;height:17px;background:#FFFFFF;"></div>
<div style="position:absolute;left:704px;top:214px;width:1px;height:19px;background:#8D7563;"></div>
<div style="position:absolute;left:705px;top:215px;width:1px;height:17px;background:#FFFFFF;"></div>
<div style="position:absolute;left:738px;top:214px;width:1px;height:19px;background:#8D7563;"></div>
<div style="position:absolute;left:739px;top:215px;width:1px;height:17px;background:#FFFFFF;"></div>
<div style="position:absolute;left:788px;top:214px;width:1px;height:19px;background:#8D7563;"></div>
<div style="position:absolute;left:789px;top:215px;width:1px;height:17px;background:#FFFFFF;"></div>
<div style="position:absolute;left:860px;top:214px;width:1px;height:19px;background:#8D7563;"></div>
<div style="position:absolute;left:861px;top:215px;width:1px;height:17px;background:#FFFFFF;"></div>
<div style="position:absolute;left:934px;top:214px;width:1px;height:19px;background:#8D7563;"></div>
<div style="position:absolute;left:935px;top:215px;width:1px;height:17px;background:#FFFFFF;"></div>
<div style="position:absolute;left:188px;top:233px;width:1px;height:462px;background:#E6E2D8;"></div>
<div style="position:absolute;left:287px;top:233px;width:1px;height:462px;background:#E6E2D8;"></div>
<div style="position:absolute;left:359px;top:233px;width:1px;height:462px;background:#E6E2D8;"></div>
<div style="position:absolute;left:704px;top:233px;width:1px;height:462px;background:#E6E2D8;"></div>
<div style="position:absolute;left:738px;top:233px;width:1px;height:462px;background:#E6E2D8;"></div>
<div style="position:absolute;left:788px;top:233px;width:1px;height:462px;background:#E6E2D8;"></div>
<div style="position:absolute;left:860px;top:233px;width:1px;height:462px;background:#E6E2D8;"></div>
<div style="position:absolute;left:934px;top:233px;width:1px;height:462px;background:#E6E2D8;"></div>
<div class="t11" style="position:absolute;left:116px;top:218px;white-space:pre;">Ordre</div>
<svg style="position:absolute;left:174px;top:221px" width="10" height="6" viewBox="0 0 10 6"><path d="M1 5 L5 1 L9 5 Z" fill="#9A8270"/></svg>
<div class="t11" style="position:absolute;left:193px;top:218px;white-space:pre;">Type</div>
<div class="t11" style="position:absolute;left:292px;top:218px;white-space:pre;">Code</div>
<div class="t11" style="position:absolute;left:364px;top:218px;white-space:pre;">Libellé</div>
<div class="t11" style="position:absolute;left:709px;top:218px;white-space:pre;">U...</div>
<div class="t11" style="position:absolute;left:740px;top:218px;white-space:pre;width:44px;text-align:right;">Qté</div>
<div class="t11" style="position:absolute;left:790px;top:218px;white-space:pre;width:66px;text-align:right;">PAU</div>
<div class="t11" style="position:absolute;left:862px;top:218px;white-space:pre;width:68px;text-align:right;">PVU</div>
<div class="t11" style="position:absolute;left:936px;top:218px;white-space:pre;width:67px;text-align:right;">PVT</div>
<div style="position:absolute;left:1008px;top:214px;width:18px;height:481px;background:linear-gradient(90deg,#F3F1EA,#FEFEFB 40%,#F1EFE7);border-left:1px solid #E2DDCF;"></div>
<div style="position:absolute;left:1008px;top:215px;width:17px;height:16px;border:1px solid #967F6C;border-radius:2px;background:linear-gradient(180deg,#FBFAF6,#E9E4D6);"></div>
<svg style="position:absolute;left:1011px;top:218px" width="11" height="9" viewBox="0 0 11 9"><path d="M2 6.5 L5.5 3 L9 6.5" stroke="#6A5A4C" stroke-width="1.4" fill="none"/></svg>
<div style="position:absolute;left:1008px;top:232px;width:17px;height:357px;border:1px solid #967F6C;border-radius:3px;background:linear-gradient(90deg,#E2DBC8,#F2EEE2 50%,#E2DBC8);"></div>
<div style="position:absolute;left:1013px;top:406px;width:7px;height:1px;background:#967F6C;"></div>
<div style="position:absolute;left:1013px;top:409px;width:7px;height:1px;background:#967F6C;"></div>
<div style="position:absolute;left:1013px;top:412px;width:7px;height:1px;background:#967F6C;"></div>
<div style="position:absolute;left:1008px;top:677px;width:17px;height:17px;border:1px solid #967F6C;border-radius:2px;background:linear-gradient(180deg,#FBFAF6,#E9E4D6);"></div>
<svg style="position:absolute;left:1011px;top:681px" width="11" height="9" viewBox="0 0 11 9"><path d="M2 2.5 L5.5 6 L9 2.5" stroke="#6A5A4C" stroke-width="1.4" fill="none"/></svg>
<div style="position:absolute;left:0;top:234px;width:1008px;height:460px;overflow:hidden"><div style="position:absolute;left:0;top:-234px;width:1008px;height:1000px"><div style="position:absolute;left:121px;top:250px;width:1px;height:450px;background:repeating-linear-gradient(180deg,#6A5848 0 1px,transparent 1px 2px);"></div>
<div style="position:absolute;left:139px;top:252px;width:1px;height:243px;background:repeating-linear-gradient(180deg,#6A5848 0 1px,transparent 1px 2px);"></div>
<div style="position:absolute;left:139px;top:522px;width:1px;height:178px;background:repeating-linear-gradient(180deg,#6A5848 0 1px,transparent 1px 2px);"></div>
<div style="position:absolute;left:157px;top:306px;width:1px;height:63px;background:repeating-linear-gradient(180deg,#6A5848 0 1px,transparent 1px 2px);"></div>
<div style="position:absolute;left:157px;top:396px;width:1px;height:45px;background:repeating-linear-gradient(180deg,#6A5848 0 1px,transparent 1px 2px);"></div>
<div style="position:absolute;left:157px;top:558px;width:1px;height:45px;background:repeating-linear-gradient(180deg,#6A5848 0 1px,transparent 1px 2px);"></div>
<div style="position:absolute;left:95px;top:234px;width:17px;height:18px;background:linear-gradient(180deg,#F7F5EF,#E7E0CF);border-left:1px solid #8D7563;border-bottom:1px solid #8D7563;border-right:1px solid #8D7563;box-shadow:inset 1px 1px 0 #FFFFFF, inset -1px 0 0 #FFFFFF;"></div>
<div style="position:absolute;left:116px;top:238px;width:11px;height:11px;border:1px solid #8D7563;border-radius:2px;background:linear-gradient(180deg,#FFFFFF,#E4DDCC);"></div><div style="position:absolute;left:119px;top:243px;width:5px;height:1px;background:#6A5848;"></div>
<div style="position:absolute;left:128px;top:243px;width:1px;height:1px;background:#6A5848;"></div>
<div style="position:absolute;left:130px;top:234px;width:1px;height:18px;background:#E6E2D8;"></div>
<div class="c bi15 blk" style="left:135px;top:234px">1</div>
<svg style="position:absolute;left:191px;top:235px" width="16" height="16" viewBox="0 0 16 16"><path d="M1.5 10 L14.5 10 L13 14.5 L8 16 L3 14.5Z" fill="#B4C2FA"/><path d="M2.5 11 h1 M4 13 h1 M6 14.5 h2 M9 12.5 h1 M11 14 h2 M13 11.5 h1" stroke="#6A86F2" stroke-width="1"/><rect x="10" y="13" width="2" height="2" fill="#3A5AE8"/><path d="M0.5 6.5 L4 4.5 L7.5 3.5 L11 4 L15 6 L15.5 9.5 L12 11.5 L4 11.5 L0.5 9.5Z" fill="#FBBE6A"/><ellipse cx="6" cy="7.5" rx="3.5" ry="2.2" fill="#FFEFD0"/><ellipse cx="11" cy="8" rx="2" ry="1.5" fill="#FAD49A"/><path d="M0.5 7 h1 M3 10.5 h1 M14 6.5 h1 M15 9 h0.8 M8 11 h1.5" stroke="#F08A20" stroke-width="1"/><path d="M1.8 5.5 Q2.5 1.5 6 0.8" stroke="#F04020" stroke-width="1.3" fill="none" stroke-dasharray="1.3 0.7"/><path d="M10 0.3 L13.2 0.6 L13.8 4 L12.2 5.8 L10.4 4.2Z" fill="#F02414"/><circle cx="8.5" cy="5.5" r="0.9" fill="#F04020"/></svg>
<div class="c bi15 blk" style="left:213px;top:234px">Lot</div>
<div class="c bi15 blk" style="left:364px;top:234px">Installation Baignoire</div>
<div class="c bi15 blk" style="left:740px;top:234px;width:46px;text-align:right">1.000</div>
<div class="c bi15 gray" style="left:790px;top:234px;width:68px;text-align:right">1 099.04</div>
<div class="c bi15 gray" style="left:862px;top:234px;width:70px;text-align:right">1 594.03</div>
<div class="c bi15 blk" style="left:936px;top:234px;width:68px;text-align:right">1 594.03</div>
<div style="position:absolute;left:95px;top:252px;width:17px;height:18px;background:linear-gradient(180deg,#F7F5EF,#E7E0CF);border-left:1px solid #8D7563;border-bottom:1px solid #8D7563;border-right:1px solid #8D7563;box-shadow:inset 1px 1px 0 #FFFFFF, inset -1px 0 0 #FFFFFF;"></div>
<div style="position:absolute;left:134px;top:256px;width:11px;height:11px;border:1px solid #8D7563;border-radius:2px;background:linear-gradient(180deg,#FFFFFF,#E4DDCC);"></div><div style="position:absolute;left:137px;top:261px;width:5px;height:1px;background:#6A5848;"></div><div style="position:absolute;left:139px;top:259px;width:1px;height:5px;background:#6A5848;"></div>
<div style="position:absolute;left:146px;top:261px;width:1px;height:1px;background:#6A5848;"></div>
<div style="position:absolute;left:148px;top:252px;width:1px;height:18px;background:#E6E2D8;"></div>
<div class="c n15 blue" style="left:152px;top:252px">1</div>
<svg style="position:absolute;left:191px;top:253px" width="16" height="16" viewBox="0 0 16 16"><ellipse cx="11" cy="13" rx="5" ry="2.8" fill="#E4AC6A"/><ellipse cx="10.5" cy="12" rx="2" ry="1" fill="#F8D050"/><rect x="6" y="3" width="7.5" height="9.5" fill="#D8602E"/><rect x="6" y="3" width="7.5" height="2.5" fill="#F8C460"/><rect x="6" y="9" width="7.5" height="3" fill="#E0A030"/><path d="M15 4.5 L13.2 8.5" stroke="#2A2A2A" stroke-width="1.5"/><path d="M15.2 4 L14.6 5.3" stroke="#C03020" stroke-width="1.2"/><g transform="translate(0 0)"><path d="M0.5 16 Q0.5 10.5 5 10.5 Q9.5 10.5 9.5 16Z" fill="#1E34C0"/><path d="M1.5 15.5 Q2 12 5 11.5" stroke="#5A78F0" stroke-width="1" fill="none"/><path d="M1 16 h8" stroke="#0A1470" stroke-width="1.2"/><rect x="2.5" y="5.5" width="5" height="5" rx="1.5" fill="#E0A070"/><rect x="3" y="5.5" width="4" height="1.6" fill="#2A1A10"/><rect x="4" y="8.5" width="2" height="1.5" fill="#C87840"/><path d="M0.8 5.5 Q1.5 0.8 4.8 0.8 Q8.2 0.8 8.8 5.5Z" fill="#F6B418"/><path d="M2.5 3.5 Q3.5 1.5 5.5 1.8" stroke="#FFE870" stroke-width="1.2" fill="none"/><path d="M0.3 5.8 h9" stroke="#6A4010" stroke-width="1"/></g></svg>
<div class="c n15 blue" style="left:212px;top:252px">Tâche</div>
<div class="c n15 blue" style="left:291px;top:252px">508010...</div>
<div class="c n15 blue" style="left:363px;top:252px;width:341px">Tranchée dans matériau dur jusqu'à 10 cm à l'é...</div>
<div class="c n15 blue" style="left:708px;top:252px">ML</div>
<div class="c n15 blue" style="left:740px;top:252px;width:46px;text-align:right">2,500</div>
<div class="c n15 gray" style="left:790px;top:252px;width:68px;text-align:right">25,66</div>
<div class="c n15 blue" style="left:862px;top:252px;width:70px;text-align:right">32,77</div>
<div class="c n15 blue" style="left:936px;top:252px;width:68px;text-align:right">81,93</div>
<div style="position:absolute;left:95px;top:270px;width:17px;height:18px;background:linear-gradient(180deg,#F7F5EF,#E7E0CF);border-left:1px solid #8D7563;border-bottom:1px solid #8D7563;border-right:1px solid #8D7563;box-shadow:inset 1px 1px 0 #FFFFFF, inset -1px 0 0 #FFFFFF;"></div>
<div style="position:absolute;left:134px;top:274px;width:11px;height:11px;border:1px solid #8D7563;border-radius:2px;background:linear-gradient(180deg,#FFFFFF,#E4DDCC);"></div><div style="position:absolute;left:137px;top:279px;width:5px;height:1px;background:#6A5848;"></div><div style="position:absolute;left:139px;top:277px;width:1px;height:5px;background:#6A5848;"></div>
<div style="position:absolute;left:146px;top:279px;width:1px;height:1px;background:#6A5848;"></div>
<div style="position:absolute;left:148px;top:270px;width:1px;height:18px;background:#E6E2D8;"></div>
<div class="c n15 blue" style="left:152px;top:270px">2</div>
<svg style="position:absolute;left:191px;top:271px" width="16" height="16" viewBox="0 0 16 16"><ellipse cx="11" cy="13" rx="5" ry="2.8" fill="#E4AC6A"/><ellipse cx="10.5" cy="12" rx="2" ry="1" fill="#F8D050"/><rect x="6" y="3" width="7.5" height="9.5" fill="#D8602E"/><rect x="6" y="3" width="7.5" height="2.5" fill="#F8C460"/><rect x="6" y="9" width="7.5" height="3" fill="#E0A030"/><path d="M15 4.5 L13.2 8.5" stroke="#2A2A2A" stroke-width="1.5"/><path d="M15.2 4 L14.6 5.3" stroke="#C03020" stroke-width="1.2"/><g transform="translate(0 0)"><path d="M0.5 16 Q0.5 10.5 5 10.5 Q9.5 10.5 9.5 16Z" fill="#1E34C0"/><path d="M1.5 15.5 Q2 12 5 11.5" stroke="#5A78F0" stroke-width="1" fill="none"/><path d="M1 16 h8" stroke="#0A1470" stroke-width="1.2"/><rect x="2.5" y="5.5" width="5" height="5" rx="1.5" fill="#E0A070"/><rect x="3" y="5.5" width="4" height="1.6" fill="#2A1A10"/><rect x="4" y="8.5" width="2" height="1.5" fill="#C87840"/><path d="M0.8 5.5 Q1.5 0.8 4.8 0.8 Q8.2 0.8 8.8 5.5Z" fill="#F6B418"/><path d="M2.5 3.5 Q3.5 1.5 5.5 1.8" stroke="#FFE870" stroke-width="1.2" fill="none"/><path d="M0.3 5.8 h9" stroke="#6A4010" stroke-width="1"/></g></svg>
<div class="c n15 blue" style="left:212px;top:270px">Tâche</div>
<div class="c n15 blue" style="left:291px;top:270px">501010...</div>
<div class="c n15 blue" style="left:363px;top:270px;width:341px">Tube cuivre écroui ø 16 x 18 mm, posé en distri...</div>
<div class="c n15 blue" style="left:708px;top:270px">ML</div>
<div class="c n15 blue" style="left:740px;top:270px;width:46px;text-align:right">3,000</div>
<div class="c n15 gray" style="left:790px;top:270px;width:68px;text-align:right">24,03</div>
<div class="c n15 blue" style="left:862px;top:270px;width:70px;text-align:right">32,87</div>
<div class="c n15 blue" style="left:936px;top:270px;width:68px;text-align:right">98,61</div>
<div style="position:absolute;left:95px;top:288px;width:17px;height:18px;background:linear-gradient(180deg,#F7F5EF,#E7E0CF);border-left:1px solid #8D7563;border-bottom:1px solid #8D7563;border-right:1px solid #8D7563;box-shadow:inset 1px 1px 0 #FFFFFF, inset -1px 0 0 #FFFFFF;"></div>
<div style="position:absolute;left:134px;top:292px;width:11px;height:11px;border:1px solid #8D7563;border-radius:2px;background:linear-gradient(180deg,#FFFFFF,#E4DDCC);"></div><div style="position:absolute;left:137px;top:297px;width:5px;height:1px;background:#6A5848;"></div>
<div style="position:absolute;left:146px;top:297px;width:1px;height:1px;background:#6A5848;"></div>
<div style="position:absolute;left:148px;top:288px;width:1px;height:18px;background:#E6E2D8;"></div>
<div class="c n15 blue" style="left:152px;top:288px">3</div>
<svg style="position:absolute;left:191px;top:289px" width="16" height="16" viewBox="0 0 16 16"><ellipse cx="11" cy="13" rx="5" ry="2.8" fill="#E4AC6A"/><ellipse cx="10.5" cy="12" rx="2" ry="1" fill="#F8D050"/><rect x="6" y="3" width="7.5" height="9.5" fill="#D8602E"/><rect x="6" y="3" width="7.5" height="2.5" fill="#F8C460"/><rect x="6" y="9" width="7.5" height="3" fill="#E0A030"/><path d="M15 4.5 L13.2 8.5" stroke="#2A2A2A" stroke-width="1.5"/><path d="M15.2 4 L14.6 5.3" stroke="#C03020" stroke-width="1.2"/><g transform="translate(0 0)"><path d="M0.5 16 Q0.5 10.5 5 10.5 Q9.5 10.5 9.5 16Z" fill="#1E34C0"/><path d="M1.5 15.5 Q2 12 5 11.5" stroke="#5A78F0" stroke-width="1" fill="none"/><path d="M1 16 h8" stroke="#0A1470" stroke-width="1.2"/><rect x="2.5" y="5.5" width="5" height="5" rx="1.5" fill="#E0A070"/><rect x="3" y="5.5" width="4" height="1.6" fill="#2A1A10"/><rect x="4" y="8.5" width="2" height="1.5" fill="#C87840"/><path d="M0.8 5.5 Q1.5 0.8 4.8 0.8 Q8.2 0.8 8.8 5.5Z" fill="#F6B418"/><path d="M2.5 3.5 Q3.5 1.5 5.5 1.8" stroke="#FFE870" stroke-width="1.2" fill="none"/><path d="M0.3 5.8 h9" stroke="#6A4010" stroke-width="1"/></g></svg>
<div class="c n15 blue" style="left:212px;top:288px">Tâche</div>
<div class="c n15 blue" style="left:291px;top:288px">502010...</div>
<div class="c n15 blue" style="left:363px;top:288px;width:341px">Tube P.V.C. ø 40 mm posé en réseau de vidan...</div>
<div class="c n15 blue" style="left:708px;top:288px">ML</div>
<div class="c n15 blue" style="left:740px;top:288px;width:46px;text-align:right">1,800</div>
<div class="c n15 gray" style="left:790px;top:288px;width:68px;text-align:right">18,04</div>
<div class="c n15 blue" style="left:862px;top:288px;width:70px;text-align:right">23,89</div>
<div class="c n15 blue" style="left:936px;top:288px;width:68px;text-align:right">43,00</div>
<div style="position:absolute;left:95px;top:306px;width:17px;height:18px;background:linear-gradient(180deg,#F7F5EF,#E7E0CF);border-left:1px solid #8D7563;border-bottom:1px solid #8D7563;border-right:1px solid #8D7563;box-shadow:inset 1px 1px 0 #FFFFFF, inset -1px 0 0 #FFFFFF;"></div>
<div style="position:absolute;left:158px;top:315px;width:8px;height:1px;background:repeating-linear-gradient(90deg,#6A5848 0 1px,transparent 1px 2px);"></div>
<div style="position:absolute;left:166px;top:306px;width:1px;height:18px;background:#E6E2D8;"></div>
<div class="c i12 green" style="left:171px;top:306px">1</div>
<svg style="position:absolute;left:191px;top:307px" width="16" height="16" viewBox="0 0 16 16"><g transform="translate(3 0)"><path d="M0.5 16 Q0.5 10.5 5 10.5 Q9.5 10.5 9.5 16Z" fill="#1E34C0"/><path d="M1.5 15.5 Q2 12 5 11.5" stroke="#5A78F0" stroke-width="1" fill="none"/><path d="M1 16 h8" stroke="#0A1470" stroke-width="1.2"/><rect x="2.5" y="5.5" width="5" height="5" rx="1.5" fill="#E0A070"/><rect x="3" y="5.5" width="4" height="1.6" fill="#2A1A10"/><rect x="4" y="8.5" width="2" height="1.5" fill="#C87840"/><path d="M0.8 5.5 Q1.5 0.8 4.8 0.8 Q8.2 0.8 8.8 5.5Z" fill="#F6B418"/><path d="M2.5 3.5 Q3.5 1.5 5.5 1.8" stroke="#FFE870" stroke-width="1.2" fill="none"/><path d="M0.3 5.8 h9" stroke="#6A4010" stroke-width="1"/></g></svg>
<div class="c i12 green" style="left:212px;top:306px">Main d'oeu...</div>
<div class="c i12 green" style="left:291px;top:306px">ZZ8005</div>
<div class="c i12 green" style="left:363px;top:306px;width:341px">Main d'œuvre plomberie</div>
<div class="c i12 green" style="left:708px;top:306px">H</div>
<div class="c i12 green" style="left:740px;top:306px;width:46px;text-align:right">0,500</div>
<div class="c i12 green" style="left:790px;top:306px;width:68px;text-align:right">25,40</div>
<div style="position:absolute;left:95px;top:324px;width:17px;height:18px;background:linear-gradient(180deg,#F7F5EF,#E7E0CF);border-left:1px solid #8D7563;border-bottom:1px solid #8D7563;border-right:1px solid #8D7563;box-shadow:inset 1px 1px 0 #FFFFFF, inset -1px 0 0 #FFFFFF;"></div>
<div style="position:absolute;left:158px;top:333px;width:8px;height:1px;background:repeating-linear-gradient(90deg,#6A5848 0 1px,transparent 1px 2px);"></div>
<div style="position:absolute;left:166px;top:324px;width:1px;height:18px;background:#E6E2D8;"></div>
<div class="c i12 green" style="left:171px;top:324px">2</div>
<svg style="position:absolute;left:191px;top:325px" width="16" height="16" viewBox="0 0 16 16"><ellipse cx="8" cy="13.5" rx="7.5" ry="2.5" fill="#DDA050"/><ellipse cx="10" cy="12" rx="3" ry="1.6" fill="#F8D068"/><rect x="1" y="1" width="10" height="11" rx="1" fill="#D8602E"/><rect x="1" y="1" width="10" height="3.5" fill="#F8C464"/><rect x="1.5" y="4" width="9" height="1" fill="#C8D0B0"/><rect x="1" y="8" width="10" height="4" fill="#DCA030"/><rect x="0.5" y="2" width="1" height="10" fill="#B86020"/><path d="M14.5 1.5 L12 7.5" stroke="#2A2A2A" stroke-width="1.6"/><path d="M14 3 L13 5.2" stroke="#C03020" stroke-width="0.8"/></svg>
<div class="c i12 green" style="left:212px;top:324px">Fourniture</div>
<div class="c i12 green" style="left:291px;top:324px">ZZ80153...</div>
<div class="c i12 green" style="left:363px;top:324px;width:341px">Tube d'évacuation en PVC Ø 40 mm</div>
<div class="c i12 green" style="left:708px;top:324px">ML</div>
<div class="c i12 green" style="left:740px;top:324px;width:46px;text-align:right">1,050</div>
<div class="c i12 green" style="left:790px;top:324px;width:68px;text-align:right">3,90</div>
<div style="position:absolute;left:95px;top:342px;width:17px;height:18px;background:linear-gradient(180deg,#F7F5EF,#E7E0CF);border-left:1px solid #8D7563;border-bottom:1px solid #8D7563;border-right:1px solid #8D7563;box-shadow:inset 1px 1px 0 #FFFFFF, inset -1px 0 0 #FFFFFF;"></div>
<div style="position:absolute;left:158px;top:351px;width:8px;height:1px;background:repeating-linear-gradient(90deg,#6A5848 0 1px,transparent 1px 2px);"></div>
<div style="position:absolute;left:166px;top:342px;width:1px;height:18px;background:#E6E2D8;"></div>
<div class="c i12 green" style="left:171px;top:342px">3</div>
<svg style="position:absolute;left:191px;top:343px" width="16" height="16" viewBox="0 0 16 16"><ellipse cx="8" cy="13.5" rx="7.5" ry="2.5" fill="#DDA050"/><ellipse cx="10" cy="12" rx="3" ry="1.6" fill="#F8D068"/><rect x="1" y="1" width="10" height="11" rx="1" fill="#D8602E"/><rect x="1" y="1" width="10" height="3.5" fill="#F8C464"/><rect x="1.5" y="4" width="9" height="1" fill="#C8D0B0"/><rect x="1" y="8" width="10" height="4" fill="#DCA030"/><rect x="0.5" y="2" width="1" height="10" fill="#B86020"/><path d="M14.5 1.5 L12 7.5" stroke="#2A2A2A" stroke-width="1.6"/><path d="M14 3 L13 5.2" stroke="#C03020" stroke-width="0.8"/></svg>
<div class="c i12 green" style="left:212px;top:342px">Fourniture</div>
<div class="c i12 green" style="left:291px;top:342px">ZZ80153...</div>
<div class="c i12 green" style="left:363px;top:342px;width:341px">Fixations pour pose tube PVC</div>
<div class="c i12 green" style="left:708px;top:342px">ENS</div>
<div class="c i12 green" style="left:740px;top:342px;width:46px;text-align:right">0,800</div>
<div class="c i12 green" style="left:790px;top:342px;width:68px;text-align:right">0,30</div>
<div style="position:absolute;left:95px;top:360px;width:17px;height:18px;background:linear-gradient(180deg,#F7F5EF,#E7E0CF);border-left:1px solid #8D7563;border-bottom:1px solid #8D7563;border-right:1px solid #8D7563;box-shadow:inset 1px 1px 0 #FFFFFF, inset -1px 0 0 #FFFFFF;"></div>
<div style="position:absolute;left:158px;top:369px;width:8px;height:1px;background:repeating-linear-gradient(90deg,#6A5848 0 1px,transparent 1px 2px);"></div>
<div style="position:absolute;left:166px;top:360px;width:1px;height:18px;background:#E6E2D8;"></div>
<div class="c i12 green" style="left:171px;top:360px">4</div>
<svg style="position:absolute;left:191px;top:361px" width="16" height="16" viewBox="0 0 16 16"><ellipse cx="8" cy="13.5" rx="7.5" ry="2.5" fill="#DDA050"/><ellipse cx="10" cy="12" rx="3" ry="1.6" fill="#F8D068"/><rect x="1" y="1" width="10" height="11" rx="1" fill="#D8602E"/><rect x="1" y="1" width="10" height="3.5" fill="#F8C464"/><rect x="1.5" y="4" width="9" height="1" fill="#C8D0B0"/><rect x="1" y="8" width="10" height="4" fill="#DCA030"/><rect x="0.5" y="2" width="1" height="10" fill="#B86020"/><path d="M14.5 1.5 L12 7.5" stroke="#2A2A2A" stroke-width="1.6"/><path d="M14 3 L13 5.2" stroke="#C03020" stroke-width="0.8"/></svg>
<div class="c i12 green" style="left:212px;top:360px">Fourniture</div>
<div class="c i12 green" style="left:291px;top:360px">ZZ80153...</div>
<div class="c i12 green" style="left:363px;top:360px;width:341px">Raccords et divers pour pose tube PVC</div>
<div class="c i12 green" style="left:708px;top:360px">ENS</div>
<div class="c i12 green" style="left:740px;top:360px;width:46px;text-align:right">1,000</div>
<div class="c i12 green" style="left:790px;top:360px;width:68px;text-align:right">1,00</div>
<div style="position:absolute;left:95px;top:378px;width:17px;height:18px;background:linear-gradient(180deg,#F7F5EF,#E7E0CF);border-left:1px solid #8D7563;border-bottom:1px solid #8D7563;border-right:1px solid #8D7563;box-shadow:inset 1px 1px 0 #FFFFFF, inset -1px 0 0 #FFFFFF;"></div>
<div style="position:absolute;left:134px;top:382px;width:11px;height:11px;border:1px solid #8D7563;border-radius:2px;background:linear-gradient(180deg,#FFFFFF,#E4DDCC);"></div><div style="position:absolute;left:137px;top:387px;width:5px;height:1px;background:#6A5848;"></div>
<div style="position:absolute;left:146px;top:387px;width:1px;height:1px;background:#6A5848;"></div>
<div style="position:absolute;left:148px;top:378px;width:1px;height:18px;background:#E6E2D8;"></div>
<div class="c n15 blue" style="left:152px;top:378px">4</div>
<svg style="position:absolute;left:191px;top:379px" width="16" height="16" viewBox="0 0 16 16"><ellipse cx="11" cy="13" rx="5" ry="2.8" fill="#E4AC6A"/><ellipse cx="10.5" cy="12" rx="2" ry="1" fill="#F8D050"/><rect x="6" y="3" width="7.5" height="9.5" fill="#D8602E"/><rect x="6" y="3" width="7.5" height="2.5" fill="#F8C460"/><rect x="6" y="9" width="7.5" height="3" fill="#E0A030"/><path d="M15 4.5 L13.2 8.5" stroke="#2A2A2A" stroke-width="1.5"/><path d="M15.2 4 L14.6 5.3" stroke="#C03020" stroke-width="1.2"/><g transform="translate(0 0)"><path d="M0.5 16 Q0.5 10.5 5 10.5 Q9.5 10.5 9.5 16Z" fill="#1E34C0"/><path d="M1.5 15.5 Q2 12 5 11.5" stroke="#5A78F0" stroke-width="1" fill="none"/><path d="M1 16 h8" stroke="#0A1470" stroke-width="1.2"/><rect x="2.5" y="5.5" width="5" height="5" rx="1.5" fill="#E0A070"/><rect x="3" y="5.5" width="4" height="1.6" fill="#2A1A10"/><rect x="4" y="8.5" width="2" height="1.5" fill="#C87840"/><path d="M0.8 5.5 Q1.5 0.8 4.8 0.8 Q8.2 0.8 8.8 5.5Z" fill="#F6B418"/><path d="M2.5 3.5 Q3.5 1.5 5.5 1.8" stroke="#FFE870" stroke-width="1.2" fill="none"/><path d="M0.3 5.8 h9" stroke="#6A4010" stroke-width="1"/></g></svg>
<div class="c n15 blue" style="left:212px;top:378px">Tâche</div>
<div class="c n15 blue" style="left:291px;top:378px">505010...</div>
<div class="c n15 blue" style="left:363px;top:378px;width:341px">Pose Baignoire rectangulaire 170x70 acrylique</div>
<div class="c n15 blue" style="left:708px;top:378px">U</div>
<div class="c n15 blue" style="left:740px;top:378px;width:46px;text-align:right">1,000</div>
<div class="c n15 gray" style="left:790px;top:378px;width:68px;text-align:right">346,56</div>
<div class="c n15 blue" style="left:862px;top:378px;width:70px;text-align:right">500,75</div>
<div class="c n15 blue" style="left:936px;top:378px;width:68px;text-align:right">500,75</div>
<div style="position:absolute;left:95px;top:396px;width:17px;height:18px;background:linear-gradient(180deg,#F7F5EF,#E7E0CF);border-left:1px solid #8D7563;border-bottom:1px solid #8D7563;border-right:1px solid #8D7563;box-shadow:inset 1px 1px 0 #FFFFFF, inset -1px 0 0 #FFFFFF;"></div>
<div style="position:absolute;left:158px;top:405px;width:8px;height:1px;background:repeating-linear-gradient(90deg,#6A5848 0 1px,transparent 1px 2px);"></div>
<div style="position:absolute;left:166px;top:396px;width:1px;height:18px;background:#E6E2D8;"></div>
<div class="c i12 green" style="left:171px;top:396px">1</div>
<svg style="position:absolute;left:191px;top:397px" width="16" height="16" viewBox="0 0 16 16"><g transform="translate(3 0)"><path d="M0.5 16 Q0.5 10.5 5 10.5 Q9.5 10.5 9.5 16Z" fill="#1E34C0"/><path d="M1.5 15.5 Q2 12 5 11.5" stroke="#5A78F0" stroke-width="1" fill="none"/><path d="M1 16 h8" stroke="#0A1470" stroke-width="1.2"/><rect x="2.5" y="5.5" width="5" height="5" rx="1.5" fill="#E0A070"/><rect x="3" y="5.5" width="4" height="1.6" fill="#2A1A10"/><rect x="4" y="8.5" width="2" height="1.5" fill="#C87840"/><path d="M0.8 5.5 Q1.5 0.8 4.8 0.8 Q8.2 0.8 8.8 5.5Z" fill="#F6B418"/><path d="M2.5 3.5 Q3.5 1.5 5.5 1.8" stroke="#FFE870" stroke-width="1.2" fill="none"/><path d="M0.3 5.8 h9" stroke="#6A4010" stroke-width="1"/></g></svg>
<div class="c i12 green" style="left:212px;top:396px">Main d'oeu...</div>
<div class="c i12 green" style="left:291px;top:396px">ZZ8005</div>
<div class="c i12 green" style="left:363px;top:396px;width:341px">Main d'œuvre plomberie</div>
<div class="c i12 green" style="left:708px;top:396px">H</div>
<div class="c i12 green" style="left:740px;top:396px;width:46px;text-align:right">3,000</div>
<div class="c i12 green" style="left:790px;top:396px;width:68px;text-align:right">25,40</div>
<div style="position:absolute;left:95px;top:414px;width:17px;height:18px;background:linear-gradient(180deg,#F7F5EF,#E7E0CF);border-left:1px solid #8D7563;border-bottom:1px solid #8D7563;border-right:1px solid #8D7563;box-shadow:inset 1px 1px 0 #FFFFFF, inset -1px 0 0 #FFFFFF;"></div>
<div style="position:absolute;left:158px;top:423px;width:8px;height:1px;background:repeating-linear-gradient(90deg,#6A5848 0 1px,transparent 1px 2px);"></div>
<div style="position:absolute;left:166px;top:414px;width:1px;height:18px;background:#E6E2D8;"></div>
<div class="c i12 green" style="left:171px;top:414px">2</div>
<svg style="position:absolute;left:191px;top:415px" width="16" height="16" viewBox="0 0 16 16"><ellipse cx="8" cy="13.5" rx="7.5" ry="2.5" fill="#DDA050"/><ellipse cx="10" cy="12" rx="3" ry="1.6" fill="#F8D068"/><rect x="1" y="1" width="10" height="11" rx="1" fill="#D8602E"/><rect x="1" y="1" width="10" height="3.5" fill="#F8C464"/><rect x="1.5" y="4" width="9" height="1" fill="#C8D0B0"/><rect x="1" y="8" width="10" height="4" fill="#DCA030"/><rect x="0.5" y="2" width="1" height="10" fill="#B86020"/><path d="M14.5 1.5 L12 7.5" stroke="#2A2A2A" stroke-width="1.6"/><path d="M14 3 L13 5.2" stroke="#C03020" stroke-width="0.8"/></svg>
<div class="c i12 green" style="left:212px;top:414px">Fourniture</div>
<div class="c i12 green" style="left:291px;top:414px">ZZ80221...</div>
<div class="c i12 green" style="left:363px;top:414px;width:341px">Baignoire en acrylique 170x70 KHEOPS  - PORCHER (...</div>
<div class="c i12 green" style="left:708px;top:414px">U</div>
<div class="c i12 green" style="left:740px;top:414px;width:46px;text-align:right">1,000</div>
<div class="c i12 green" style="left:790px;top:414px;width:68px;text-align:right">268,80</div>
<div style="position:absolute;left:95px;top:432px;width:17px;height:18px;background:linear-gradient(180deg,#F7F5EF,#E7E0CF);border-left:1px solid #8D7563;border-bottom:1px solid #8D7563;border-right:1px solid #8D7563;box-shadow:inset 1px 1px 0 #FFFFFF, inset -1px 0 0 #FFFFFF;"></div>
<div style="position:absolute;left:158px;top:441px;width:8px;height:1px;background:repeating-linear-gradient(90deg,#6A5848 0 1px,transparent 1px 2px);"></div>
<div style="position:absolute;left:166px;top:432px;width:1px;height:18px;background:#E6E2D8;"></div>
<div class="c i12 green" style="left:171px;top:432px">3</div>
<svg style="position:absolute;left:191px;top:433px" width="16" height="16" viewBox="0 0 16 16"><ellipse cx="8" cy="13.5" rx="7.5" ry="2.5" fill="#DDA050"/><ellipse cx="10" cy="12" rx="3" ry="1.6" fill="#F8D068"/><rect x="1" y="1" width="10" height="11" rx="1" fill="#D8602E"/><rect x="1" y="1" width="10" height="3.5" fill="#F8C464"/><rect x="1.5" y="4" width="9" height="1" fill="#C8D0B0"/><rect x="1" y="8" width="10" height="4" fill="#DCA030"/><rect x="0.5" y="2" width="1" height="10" fill="#B86020"/><path d="M14.5 1.5 L12 7.5" stroke="#2A2A2A" stroke-width="1.6"/><path d="M14 3 L13 5.2" stroke="#C03020" stroke-width="0.8"/></svg>
<div class="c i12 green" style="left:212px;top:432px">Fourniture</div>
<div class="c i12 green" style="left:291px;top:432px">ZZ90541...</div>
<div class="c i12 green" style="left:363px;top:432px;width:341px">Mastic silicone de type acétique anti-moisissures</div>
<div class="c i12 green" style="left:708px;top:432px">U</div>
<div class="c i12 green" style="left:740px;top:432px;width:46px;text-align:right">0,400</div>
<div class="c i12 green" style="left:790px;top:432px;width:68px;text-align:right">3,90</div>
<div style="position:absolute;left:95px;top:450px;width:17px;height:18px;background:linear-gradient(180deg,#F7F5EF,#E7E0CF);border-left:1px solid #8D7563;border-bottom:1px solid #8D7563;border-right:1px solid #8D7563;box-shadow:inset 1px 1px 0 #FFFFFF, inset -1px 0 0 #FFFFFF;"></div>
<div style="position:absolute;left:140px;top:459px;width:9px;height:1px;background:repeating-linear-gradient(90deg,#6A5848 0 1px,transparent 1px 2px);"></div>
<div style="position:absolute;left:148px;top:450px;width:1px;height:18px;background:#E6E2D8;"></div>
<div class="c n15 blue" style="left:152px;top:450px">5</div>
<svg style="position:absolute;left:191px;top:451px" width="16" height="16" viewBox="0 0 16 16"><ellipse cx="8" cy="13.5" rx="7.5" ry="2.5" fill="#DDA050"/><ellipse cx="10" cy="12" rx="3" ry="1.6" fill="#F8D068"/><rect x="1" y="1" width="10" height="11" rx="1" fill="#D8602E"/><rect x="1" y="1" width="10" height="3.5" fill="#F8C464"/><rect x="1.5" y="4" width="9" height="1" fill="#C8D0B0"/><rect x="1" y="8" width="10" height="4" fill="#DCA030"/><rect x="0.5" y="2" width="1" height="10" fill="#B86020"/><path d="M14.5 1.5 L12 7.5" stroke="#2A2A2A" stroke-width="1.6"/><path d="M14 3 L13 5.2" stroke="#C03020" stroke-width="0.8"/></svg>
<div class="c n15 blue" style="left:212px;top:450px">Fourniture</div>
<div class="c n15 blue" style="left:291px;top:450px">ZZ8072...</div>
<div class="c n15 blue" style="left:363px;top:450px;width:341px">Vidage complet chromé pour baignoire avec v...</div>
<div class="c n15 blue" style="left:708px;top:450px">U</div>
<div class="c n15 blue" style="left:740px;top:450px;width:46px;text-align:right">1,000</div>
<div class="c n15 blue" style="left:790px;top:450px;width:68px;text-align:right">171,95</div>
<div class="c n15 blue" style="left:862px;top:450px;width:70px;text-align:right">256,32</div>
<div class="c n15 blue" style="left:936px;top:450px;width:68px;text-align:right">256,32</div>
<div style="position:absolute;left:95px;top:468px;width:17px;height:18px;background:linear-gradient(180deg,#F7F5EF,#E7E0CF);border-left:1px solid #8D7563;border-bottom:1px solid #8D7563;border-right:1px solid #8D7563;box-shadow:inset 1px 1px 0 #FFFFFF, inset -1px 0 0 #FFFFFF;"></div>
<div style="position:absolute;left:140px;top:477px;width:9px;height:1px;background:repeating-linear-gradient(90deg,#6A5848 0 1px,transparent 1px 2px);"></div>
<div style="position:absolute;left:148px;top:468px;width:1px;height:18px;background:#E6E2D8;"></div>
<div class="c n15 blue" style="left:152px;top:468px">6</div>
<svg style="position:absolute;left:191px;top:469px" width="16" height="16" viewBox="0 0 16 16"><ellipse cx="8" cy="13.5" rx="7.5" ry="2.5" fill="#DDA050"/><ellipse cx="10" cy="12" rx="3" ry="1.6" fill="#F8D068"/><rect x="1" y="1" width="10" height="11" rx="1" fill="#D8602E"/><rect x="1" y="1" width="10" height="3.5" fill="#F8C464"/><rect x="1.5" y="4" width="9" height="1" fill="#C8D0B0"/><rect x="1" y="8" width="10" height="4" fill="#DCA030"/><rect x="0.5" y="2" width="1" height="10" fill="#B86020"/><path d="M14.5 1.5 L12 7.5" stroke="#2A2A2A" stroke-width="1.6"/><path d="M14 3 L13 5.2" stroke="#C03020" stroke-width="0.8"/></svg>
<div class="c n15 blue" style="left:212px;top:468px">Fourniture</div>
<div class="c n15 blue" style="left:291px;top:468px">ZZ8056...</div>
<div class="c n15 blue" style="left:363px;top:468px;width:341px">Mitigeur thermostatique bains/douche Chromé ...</div>
<div class="c n15 blue" style="left:708px;top:468px">U</div>
<div class="c n15 blue" style="left:740px;top:468px;width:46px;text-align:right">1,000</div>
<div class="c n15 blue" style="left:790px;top:468px;width:68px;text-align:right">236,70</div>
<div class="c n15 blue" style="left:862px;top:468px;width:70px;text-align:right">351,85</div>
<div class="c n15 blue" style="left:936px;top:468px;width:68px;text-align:right">351,85</div>
<div style="position:absolute;left:95px;top:486px;width:17px;height:18px;background:linear-gradient(180deg,#F7F5EF,#E7E0CF);border-left:1px solid #8D7563;border-bottom:1px solid #8D7563;border-right:1px solid #8D7563;box-shadow:inset 1px 1px 0 #FFFFFF, inset -1px 0 0 #FFFFFF;"></div>
<div style="position:absolute;left:140px;top:495px;width:9px;height:1px;background:repeating-linear-gradient(90deg,#6A5848 0 1px,transparent 1px 2px);"></div>
<div style="position:absolute;left:148px;top:486px;width:1px;height:18px;background:#E6E2D8;"></div>
<div class="c n15 blue" style="left:152px;top:486px">7</div>
<svg style="position:absolute;left:191px;top:487px" width="16" height="16" viewBox="0 0 16 16"><ellipse cx="8" cy="13.5" rx="7.5" ry="2.5" fill="#DDA050"/><ellipse cx="10" cy="12" rx="3" ry="1.6" fill="#F8D068"/><rect x="1" y="1" width="10" height="11" rx="1" fill="#D8602E"/><rect x="1" y="1" width="10" height="3.5" fill="#F8C464"/><rect x="1.5" y="4" width="9" height="1" fill="#C8D0B0"/><rect x="1" y="8" width="10" height="4" fill="#DCA030"/><rect x="0.5" y="2" width="1" height="10" fill="#B86020"/><path d="M14.5 1.5 L12 7.5" stroke="#2A2A2A" stroke-width="1.6"/><path d="M14 3 L13 5.2" stroke="#C03020" stroke-width="0.8"/></svg>
<div class="c n15 blue" style="left:212px;top:486px">Fourniture</div>
<div class="c n15 blue" style="left:291px;top:486px">ZZ8066...</div>
<div class="c n15 blue" style="left:363px;top:486px;width:341px">Ensemble de douche SELECTA / UNICA'B  - 3...</div>
<div class="c n15 blue" style="left:708px;top:486px">U</div>
<div class="c n15 blue" style="left:740px;top:486px;width:46px;text-align:right">1,000</div>
<div class="c n15 blue" style="left:790px;top:486px;width:68px;text-align:right">175,12</div>
<div class="c n15 blue" style="left:862px;top:486px;width:70px;text-align:right">261,57</div>
<div class="c n15 blue" style="left:936px;top:486px;width:68px;text-align:right">261,57</div>
<div style="position:absolute;left:95px;top:504px;width:17px;height:18px;background:linear-gradient(180deg,#F7F5EF,#E7E0CF);border-left:1px solid #8D7563;border-bottom:1px solid #8D7563;border-right:1px solid #8D7563;box-shadow:inset 1px 1px 0 #FFFFFF, inset -1px 0 0 #FFFFFF;"></div>
<div style="position:absolute;left:116px;top:508px;width:11px;height:11px;border:1px solid #8D7563;border-radius:2px;background:linear-gradient(180deg,#FFFFFF,#E4DDCC);"></div><div style="position:absolute;left:119px;top:513px;width:5px;height:1px;background:#6A5848;"></div>
<div style="position:absolute;left:128px;top:513px;width:1px;height:1px;background:#6A5848;"></div>
<div style="position:absolute;left:130px;top:504px;width:1px;height:18px;background:#E6E2D8;"></div>
<div class="c bi15 blk" style="left:135px;top:504px">2</div>
<svg style="position:absolute;left:191px;top:505px" width="16" height="16" viewBox="0 0 16 16"><path d="M1.5 10 L14.5 10 L13 14.5 L8 16 L3 14.5Z" fill="#B4C2FA"/><path d="M2.5 11 h1 M4 13 h1 M6 14.5 h2 M9 12.5 h1 M11 14 h2 M13 11.5 h1" stroke="#6A86F2" stroke-width="1"/><rect x="10" y="13" width="2" height="2" fill="#3A5AE8"/><path d="M0.5 6.5 L4 4.5 L7.5 3.5 L11 4 L15 6 L15.5 9.5 L12 11.5 L4 11.5 L0.5 9.5Z" fill="#FBBE6A"/><ellipse cx="6" cy="7.5" rx="3.5" ry="2.2" fill="#FFEFD0"/><ellipse cx="11" cy="8" rx="2" ry="1.5" fill="#FAD49A"/><path d="M0.5 7 h1 M3 10.5 h1 M14 6.5 h1 M15 9 h0.8 M8 11 h1.5" stroke="#F08A20" stroke-width="1"/><path d="M1.8 5.5 Q2.5 1.5 6 0.8" stroke="#F04020" stroke-width="1.3" fill="none" stroke-dasharray="1.3 0.7"/><path d="M10 0.3 L13.2 0.6 L13.8 4 L12.2 5.8 L10.4 4.2Z" fill="#F02414"/><circle cx="8.5" cy="5.5" r="0.9" fill="#F04020"/></svg>
<div class="c bi15 blk" style="left:213px;top:504px">Lot</div>
<div class="c bi15 blk" style="left:364px;top:504px">Electricité Cuisine</div>
<div class="c bi15 blk" style="left:740px;top:504px;width:46px;text-align:right">1.000</div>
<div class="c bi15 gray" style="left:790px;top:504px;width:68px;text-align:right">654.65</div>
<div class="c bi15 gray" style="left:862px;top:504px;width:70px;text-align:right">904.82</div>
<div class="c bi15 blk" style="left:936px;top:504px;width:68px;text-align:right">904.82</div>
<div style="position:absolute;left:95px;top:522px;width:17px;height:18px;background:linear-gradient(180deg,#F7F5EF,#E7E0CF);border-left:1px solid #8D7563;border-bottom:1px solid #8D7563;border-right:1px solid #8D7563;box-shadow:inset 1px 1px 0 #FFFFFF, inset -1px 0 0 #FFFFFF;"></div>
<div style="position:absolute;left:134px;top:526px;width:11px;height:11px;border:1px solid #8D7563;border-radius:2px;background:linear-gradient(180deg,#FFFFFF,#E4DDCC);"></div><div style="position:absolute;left:137px;top:531px;width:5px;height:1px;background:#6A5848;"></div><div style="position:absolute;left:139px;top:529px;width:1px;height:5px;background:#6A5848;"></div>
<div style="position:absolute;left:146px;top:531px;width:1px;height:1px;background:#6A5848;"></div>
<div style="position:absolute;left:148px;top:522px;width:1px;height:18px;background:#E6E2D8;"></div>
<div class="c n15 blue" style="left:152px;top:522px">1</div>
<svg style="position:absolute;left:191px;top:523px" width="16" height="16" viewBox="0 0 16 16"><ellipse cx="11" cy="13" rx="5" ry="2.8" fill="#E4AC6A"/><ellipse cx="10.5" cy="12" rx="2" ry="1" fill="#F8D050"/><rect x="6" y="3" width="7.5" height="9.5" fill="#D8602E"/><rect x="6" y="3" width="7.5" height="2.5" fill="#F8C460"/><rect x="6" y="9" width="7.5" height="3" fill="#E0A030"/><path d="M15 4.5 L13.2 8.5" stroke="#2A2A2A" stroke-width="1.5"/><path d="M15.2 4 L14.6 5.3" stroke="#C03020" stroke-width="1.2"/><g transform="translate(0 0)"><path d="M0.5 16 Q0.5 10.5 5 10.5 Q9.5 10.5 9.5 16Z" fill="#1E34C0"/><path d="M1.5 15.5 Q2 12 5 11.5" stroke="#5A78F0" stroke-width="1" fill="none"/><path d="M1 16 h8" stroke="#0A1470" stroke-width="1.2"/><rect x="2.5" y="5.5" width="5" height="5" rx="1.5" fill="#E0A070"/><rect x="3" y="5.5" width="4" height="1.6" fill="#2A1A10"/><rect x="4" y="8.5" width="2" height="1.5" fill="#C87840"/><path d="M0.8 5.5 Q1.5 0.8 4.8 0.8 Q8.2 0.8 8.8 5.5Z" fill="#F6B418"/><path d="M2.5 3.5 Q3.5 1.5 5.5 1.8" stroke="#FFE870" stroke-width="1.2" fill="none"/><path d="M0.3 5.8 h9" stroke="#6A4010" stroke-width="1"/></g></svg>
<div class="c n15 blue" style="left:212px;top:522px">Tâche</div>
<div class="c n15 blue" style="left:291px;top:522px">704020...</div>
<div class="c n15 blue" style="left:363px;top:522px;width:341px">Simple allumage 3 points lumineux</div>
<div class="c n15 blue" style="left:708px;top:522px">U</div>
<div class="c n15 blue" style="left:740px;top:522px;width:46px;text-align:right">1,000</div>
<div class="c n15 gray" style="left:790px;top:522px;width:68px;text-align:right">45,15</div>
<div class="c n15 blue" style="left:862px;top:522px;width:70px;text-align:right">62,00</div>
<div class="c n15 blue" style="left:936px;top:522px;width:68px;text-align:right">62,00</div>
<div style="position:absolute;left:95px;top:540px;width:17px;height:18px;background:linear-gradient(180deg,#F7F5EF,#E7E0CF);border-left:1px solid #8D7563;border-bottom:1px solid #8D7563;border-right:1px solid #8D7563;box-shadow:inset 1px 1px 0 #FFFFFF, inset -1px 0 0 #FFFFFF;"></div>
<div style="position:absolute;left:134px;top:544px;width:11px;height:11px;border:1px solid #8D7563;border-radius:2px;background:linear-gradient(180deg,#FFFFFF,#E4DDCC);"></div><div style="position:absolute;left:137px;top:549px;width:5px;height:1px;background:#6A5848;"></div>
<div style="position:absolute;left:146px;top:549px;width:1px;height:1px;background:#6A5848;"></div>
<div style="position:absolute;left:148px;top:540px;width:1px;height:18px;background:#E6E2D8;"></div>
<div class="c n15 blue" style="left:152px;top:540px">2</div>
<svg style="position:absolute;left:191px;top:541px" width="16" height="16" viewBox="0 0 16 16"><ellipse cx="11" cy="13" rx="5" ry="2.8" fill="#E4AC6A"/><ellipse cx="10.5" cy="12" rx="2" ry="1" fill="#F8D050"/><rect x="6" y="3" width="7.5" height="9.5" fill="#D8602E"/><rect x="6" y="3" width="7.5" height="2.5" fill="#F8C460"/><rect x="6" y="9" width="7.5" height="3" fill="#E0A030"/><path d="M15 4.5 L13.2 8.5" stroke="#2A2A2A" stroke-width="1.5"/><path d="M15.2 4 L14.6 5.3" stroke="#C03020" stroke-width="1.2"/><g transform="translate(0 0)"><path d="M0.5 16 Q0.5 10.5 5 10.5 Q9.5 10.5 9.5 16Z" fill="#1E34C0"/><path d="M1.5 15.5 Q2 12 5 11.5" stroke="#5A78F0" stroke-width="1" fill="none"/><path d="M1 16 h8" stroke="#0A1470" stroke-width="1.2"/><rect x="2.5" y="5.5" width="5" height="5" rx="1.5" fill="#E0A070"/><rect x="3" y="5.5" width="4" height="1.6" fill="#2A1A10"/><rect x="4" y="8.5" width="2" height="1.5" fill="#C87840"/><path d="M0.8 5.5 Q1.5 0.8 4.8 0.8 Q8.2 0.8 8.8 5.5Z" fill="#F6B418"/><path d="M2.5 3.5 Q3.5 1.5 5.5 1.8" stroke="#FFE870" stroke-width="1.2" fill="none"/><path d="M0.3 5.8 h9" stroke="#6A4010" stroke-width="1"/></g></svg>
<div class="c n15 blue" style="left:212px;top:540px">Tâche</div>
<div class="c n15 blue" style="left:291px;top:540px">702010...</div>
<div class="c n15 blue" style="left:363px;top:540px;width:341px">Spot encastré équipé de lampe halogène y co...</div>
<div class="c n15 blue" style="left:708px;top:540px">U</div>
<div class="c n15 blue" style="left:740px;top:540px;width:46px;text-align:right">3,000</div>
<div class="c n15 gray" style="left:790px;top:540px;width:68px;text-align:right">37,50</div>
<div class="c n15 blue" style="left:862px;top:540px;width:70px;text-align:right">51,49</div>
<div class="c n15 blue" style="left:936px;top:540px;width:68px;text-align:right">154,47</div>
<div style="position:absolute;left:95px;top:558px;width:17px;height:18px;background:linear-gradient(180deg,#F7F5EF,#E7E0CF);border-left:1px solid #8D7563;border-bottom:1px solid #8D7563;border-right:1px solid #8D7563;box-shadow:inset 1px 1px 0 #FFFFFF, inset -1px 0 0 #FFFFFF;"></div>
<div style="position:absolute;left:158px;top:567px;width:8px;height:1px;background:repeating-linear-gradient(90deg,#6A5848 0 1px,transparent 1px 2px);"></div>
<div style="position:absolute;left:166px;top:558px;width:1px;height:18px;background:#E6E2D8;"></div>
<div class="c i12 green" style="left:171px;top:558px">1</div>
<svg style="position:absolute;left:191px;top:559px" width="16" height="16" viewBox="0 0 16 16"><g transform="translate(3 0)"><path d="M0.5 16 Q0.5 10.5 5 10.5 Q9.5 10.5 9.5 16Z" fill="#1E34C0"/><path d="M1.5 15.5 Q2 12 5 11.5" stroke="#5A78F0" stroke-width="1" fill="none"/><path d="M1 16 h8" stroke="#0A1470" stroke-width="1.2"/><rect x="2.5" y="5.5" width="5" height="5" rx="1.5" fill="#E0A070"/><rect x="3" y="5.5" width="4" height="1.6" fill="#2A1A10"/><rect x="4" y="8.5" width="2" height="1.5" fill="#C87840"/><path d="M0.8 5.5 Q1.5 0.8 4.8 0.8 Q8.2 0.8 8.8 5.5Z" fill="#F6B418"/><path d="M2.5 3.5 Q3.5 1.5 5.5 1.8" stroke="#FFE870" stroke-width="1.2" fill="none"/><path d="M0.3 5.8 h9" stroke="#6A4010" stroke-width="1"/></g></svg>
<div class="c i12 green" style="left:212px;top:558px">Main d'oeu...</div>
<div class="c i12 green" style="left:291px;top:558px">ZZ3005</div>
<div class="c i12 green" style="left:363px;top:558px;width:341px">Main d'œuvre électricité</div>
<div class="c i12 green" style="left:708px;top:558px">H</div>
<div class="c i12 green" style="left:740px;top:558px;width:46px;text-align:right">0,750</div>
<div class="c i12 green" style="left:790px;top:558px;width:68px;text-align:right">25,40</div>
<div style="position:absolute;left:95px;top:576px;width:17px;height:18px;background:linear-gradient(180deg,#F7F5EF,#E7E0CF);border-left:1px solid #8D7563;border-bottom:1px solid #8D7563;border-right:1px solid #8D7563;box-shadow:inset 1px 1px 0 #FFFFFF, inset -1px 0 0 #FFFFFF;"></div>
<div style="position:absolute;left:158px;top:585px;width:8px;height:1px;background:repeating-linear-gradient(90deg,#6A5848 0 1px,transparent 1px 2px);"></div>
<div style="position:absolute;left:166px;top:576px;width:1px;height:18px;background:#E6E2D8;"></div>
<div class="c i12 green" style="left:171px;top:576px">2</div>
<svg style="position:absolute;left:191px;top:577px" width="16" height="16" viewBox="0 0 16 16"><ellipse cx="8" cy="13.5" rx="7.5" ry="2.5" fill="#DDA050"/><ellipse cx="10" cy="12" rx="3" ry="1.6" fill="#F8D068"/><rect x="1" y="1" width="10" height="11" rx="1" fill="#D8602E"/><rect x="1" y="1" width="10" height="3.5" fill="#F8C464"/><rect x="1.5" y="4" width="9" height="1" fill="#C8D0B0"/><rect x="1" y="8" width="10" height="4" fill="#DCA030"/><rect x="0.5" y="2" width="1" height="10" fill="#B86020"/><path d="M14.5 1.5 L12 7.5" stroke="#2A2A2A" stroke-width="1.6"/><path d="M14 3 L13 5.2" stroke="#C03020" stroke-width="0.8"/></svg>
<div class="c i12 green" style="left:212px;top:576px">Fourniture</div>
<div class="c i12 green" style="left:291px;top:576px">ZZ30358...</div>
<div class="c i12 green" style="left:363px;top:576px;width:341px">Spot à encastrer orientable. 1x50 watts douille GU5 12 v...</div>
<div class="c i12 green" style="left:708px;top:576px">U</div>
<div class="c i12 green" style="left:740px;top:576px;width:46px;text-align:right">1,000</div>
<div class="c i12 green" style="left:790px;top:576px;width:68px;text-align:right">15,40</div>
<div style="position:absolute;left:95px;top:594px;width:17px;height:18px;background:linear-gradient(180deg,#F7F5EF,#E7E0CF);border-left:1px solid #8D7563;border-bottom:1px solid #8D7563;border-right:1px solid #8D7563;box-shadow:inset 1px 1px 0 #FFFFFF, inset -1px 0 0 #FFFFFF;"></div>
<div style="position:absolute;left:158px;top:603px;width:8px;height:1px;background:repeating-linear-gradient(90deg,#6A5848 0 1px,transparent 1px 2px);"></div>
<div style="position:absolute;left:166px;top:594px;width:1px;height:18px;background:#E6E2D8;"></div>
<div class="c i12 green" style="left:171px;top:594px">3</div>
<svg style="position:absolute;left:191px;top:595px" width="16" height="16" viewBox="0 0 16 16"><ellipse cx="8" cy="13.5" rx="7.5" ry="2.5" fill="#DDA050"/><ellipse cx="10" cy="12" rx="3" ry="1.6" fill="#F8D068"/><rect x="1" y="1" width="10" height="11" rx="1" fill="#D8602E"/><rect x="1" y="1" width="10" height="3.5" fill="#F8C464"/><rect x="1.5" y="4" width="9" height="1" fill="#C8D0B0"/><rect x="1" y="8" width="10" height="4" fill="#DCA030"/><rect x="0.5" y="2" width="1" height="10" fill="#B86020"/><path d="M14.5 1.5 L12 7.5" stroke="#2A2A2A" stroke-width="1.6"/><path d="M14 3 L13 5.2" stroke="#C03020" stroke-width="0.8"/></svg>
<div class="c i12 green" style="left:212px;top:594px">Fourniture</div>
<div class="c i12 green" style="left:291px;top:594px">ZZ30351...</div>
<div class="c i12 green" style="left:363px;top:594px;width:341px">Ampoule basse tension Xénon 50 W Culot GU 5,3</div>
<div class="c i12 green" style="left:708px;top:594px">U</div>
<div class="c i12 green" style="left:740px;top:594px;width:46px;text-align:right">1,000</div>
<div class="c i12 green" style="left:790px;top:594px;width:68px;text-align:right">3,05</div>
<div style="position:absolute;left:95px;top:612px;width:17px;height:18px;background:linear-gradient(180deg,#F7F5EF,#E7E0CF);border-left:1px solid #8D7563;border-bottom:1px solid #8D7563;border-right:1px solid #8D7563;box-shadow:inset 1px 1px 0 #FFFFFF, inset -1px 0 0 #FFFFFF;"></div>
<div style="position:absolute;left:134px;top:616px;width:11px;height:11px;border:1px solid #8D7563;border-radius:2px;background:linear-gradient(180deg,#FFFFFF,#E4DDCC);"></div><div style="position:absolute;left:137px;top:621px;width:5px;height:1px;background:#6A5848;"></div><div style="position:absolute;left:139px;top:619px;width:1px;height:5px;background:#6A5848;"></div>
<div style="position:absolute;left:146px;top:621px;width:1px;height:1px;background:#6A5848;"></div>
<div style="position:absolute;left:148px;top:612px;width:1px;height:18px;background:#E6E2D8;"></div>
<div class="c n15 blue" style="left:152px;top:612px">3</div>
<svg style="position:absolute;left:191px;top:613px" width="16" height="16" viewBox="0 0 16 16"><ellipse cx="11" cy="13" rx="5" ry="2.8" fill="#E4AC6A"/><ellipse cx="10.5" cy="12" rx="2" ry="1" fill="#F8D050"/><rect x="6" y="3" width="7.5" height="9.5" fill="#D8602E"/><rect x="6" y="3" width="7.5" height="2.5" fill="#F8C460"/><rect x="6" y="9" width="7.5" height="3" fill="#E0A030"/><path d="M15 4.5 L13.2 8.5" stroke="#2A2A2A" stroke-width="1.5"/><path d="M15.2 4 L14.6 5.3" stroke="#C03020" stroke-width="1.2"/><g transform="translate(0 0)"><path d="M0.5 16 Q0.5 10.5 5 10.5 Q9.5 10.5 9.5 16Z" fill="#1E34C0"/><path d="M1.5 15.5 Q2 12 5 11.5" stroke="#5A78F0" stroke-width="1" fill="none"/><path d="M1 16 h8" stroke="#0A1470" stroke-width="1.2"/><rect x="2.5" y="5.5" width="5" height="5" rx="1.5" fill="#E0A070"/><rect x="3" y="5.5" width="4" height="1.6" fill="#2A1A10"/><rect x="4" y="8.5" width="2" height="1.5" fill="#C87840"/><path d="M0.8 5.5 Q1.5 0.8 4.8 0.8 Q8.2 0.8 8.8 5.5Z" fill="#F6B418"/><path d="M2.5 3.5 Q3.5 1.5 5.5 1.8" stroke="#FFE870" stroke-width="1.2" fill="none"/><path d="M0.3 5.8 h9" stroke="#6A4010" stroke-width="1"/></g></svg>
<div class="c n15 blue" style="left:212px;top:612px">Tâche</div>
<div class="c n15 blue" style="left:291px;top:612px">705040...</div>
<div class="c n15 blue" style="left:363px;top:612px;width:341px">Prise 32 A + T</div>
<div class="c n15 blue" style="left:708px;top:612px">U</div>
<div class="c n15 blue" style="left:740px;top:612px;width:46px;text-align:right">1,000</div>
<div class="c n15 gray" style="left:790px;top:612px;width:68px;text-align:right">59,22</div>
<div class="c n15 blue" style="left:862px;top:612px;width:70px;text-align:right">85,66</div>
<div class="c n15 blue" style="left:936px;top:612px;width:68px;text-align:right">85,66</div>
<div style="position:absolute;left:95px;top:630px;width:17px;height:18px;background:linear-gradient(180deg,#F7F5EF,#E7E0CF);border-left:1px solid #8D7563;border-bottom:1px solid #8D7563;border-right:1px solid #8D7563;box-shadow:inset 1px 1px 0 #FFFFFF, inset -1px 0 0 #FFFFFF;"></div>
<div style="position:absolute;left:134px;top:634px;width:11px;height:11px;border:1px solid #8D7563;border-radius:2px;background:linear-gradient(180deg,#FFFFFF,#E4DDCC);"></div><div style="position:absolute;left:137px;top:639px;width:5px;height:1px;background:#6A5848;"></div><div style="position:absolute;left:139px;top:637px;width:1px;height:5px;background:#6A5848;"></div>
<div style="position:absolute;left:146px;top:639px;width:1px;height:1px;background:#6A5848;"></div>
<div style="position:absolute;left:148px;top:630px;width:1px;height:18px;background:#E6E2D8;"></div>
<div class="c n15 blue" style="left:152px;top:630px">4</div>
<svg style="position:absolute;left:191px;top:631px" width="16" height="16" viewBox="0 0 16 16"><ellipse cx="11" cy="13" rx="5" ry="2.8" fill="#E4AC6A"/><ellipse cx="10.5" cy="12" rx="2" ry="1" fill="#F8D050"/><rect x="6" y="3" width="7.5" height="9.5" fill="#D8602E"/><rect x="6" y="3" width="7.5" height="2.5" fill="#F8C460"/><rect x="6" y="9" width="7.5" height="3" fill="#E0A030"/><path d="M15 4.5 L13.2 8.5" stroke="#2A2A2A" stroke-width="1.5"/><path d="M15.2 4 L14.6 5.3" stroke="#C03020" stroke-width="1.2"/><g transform="translate(0 0)"><path d="M0.5 16 Q0.5 10.5 5 10.5 Q9.5 10.5 9.5 16Z" fill="#1E34C0"/><path d="M1.5 15.5 Q2 12 5 11.5" stroke="#5A78F0" stroke-width="1" fill="none"/><path d="M1 16 h8" stroke="#0A1470" stroke-width="1.2"/><rect x="2.5" y="5.5" width="5" height="5" rx="1.5" fill="#E0A070"/><rect x="3" y="5.5" width="4" height="1.6" fill="#2A1A10"/><rect x="4" y="8.5" width="2" height="1.5" fill="#C87840"/><path d="M0.8 5.5 Q1.5 0.8 4.8 0.8 Q8.2 0.8 8.8 5.5Z" fill="#F6B418"/><path d="M2.5 3.5 Q3.5 1.5 5.5 1.8" stroke="#FFE870" stroke-width="1.2" fill="none"/><path d="M0.3 5.8 h9" stroke="#6A4010" stroke-width="1"/></g></svg>
<div class="c n15 blue" style="left:212px;top:630px">Tâche</div>
<div class="c n15 blue" style="left:291px;top:630px">705040...</div>
<div class="c n15 blue" style="left:363px;top:630px;width:341px">Prise 20 A + T</div>
<div class="c n15 blue" style="left:708px;top:630px">U</div>
<div class="c n15 blue" style="left:740px;top:630px;width:46px;text-align:right">1,000</div>
<div class="c n15 gray" style="left:790px;top:630px;width:68px;text-align:right">37,23</div>
<div class="c n15 blue" style="left:862px;top:630px;width:70px;text-align:right">52,68</div>
<div class="c n15 blue" style="left:936px;top:630px;width:68px;text-align:right">52,68</div>
<div style="position:absolute;left:95px;top:648px;width:17px;height:18px;background:linear-gradient(180deg,#F7F5EF,#E7E0CF);border-left:1px solid #8D7563;border-bottom:1px solid #8D7563;border-right:1px solid #8D7563;box-shadow:inset 1px 1px 0 #FFFFFF, inset -1px 0 0 #FFFFFF;"></div>
<div style="position:absolute;left:134px;top:652px;width:11px;height:11px;border:1px solid #8D7563;border-radius:2px;background:linear-gradient(180deg,#FFFFFF,#E4DDCC);"></div><div style="position:absolute;left:137px;top:657px;width:5px;height:1px;background:#6A5848;"></div><div style="position:absolute;left:139px;top:655px;width:1px;height:5px;background:#6A5848;"></div>
<div style="position:absolute;left:146px;top:657px;width:1px;height:1px;background:#6A5848;"></div>
<div style="position:absolute;left:148px;top:648px;width:1px;height:18px;background:#E6E2D8;"></div>
<div class="c n15 blue" style="left:152px;top:648px">5</div>
<svg style="position:absolute;left:191px;top:649px" width="16" height="16" viewBox="0 0 16 16"><ellipse cx="11" cy="13" rx="5" ry="2.8" fill="#E4AC6A"/><ellipse cx="10.5" cy="12" rx="2" ry="1" fill="#F8D050"/><rect x="6" y="3" width="7.5" height="9.5" fill="#D8602E"/><rect x="6" y="3" width="7.5" height="2.5" fill="#F8C460"/><rect x="6" y="9" width="7.5" height="3" fill="#E0A030"/><path d="M15 4.5 L13.2 8.5" stroke="#2A2A2A" stroke-width="1.5"/><path d="M15.2 4 L14.6 5.3" stroke="#C03020" stroke-width="1.2"/><g transform="translate(0 0)"><path d="M0.5 16 Q0.5 10.5 5 10.5 Q9.5 10.5 9.5 16Z" fill="#1E34C0"/><path d="M1.5 15.5 Q2 12 5 11.5" stroke="#5A78F0" stroke-width="1" fill="none"/><path d="M1 16 h8" stroke="#0A1470" stroke-width="1.2"/><rect x="2.5" y="5.5" width="5" height="5" rx="1.5" fill="#E0A070"/><rect x="3" y="5.5" width="4" height="1.6" fill="#2A1A10"/><rect x="4" y="8.5" width="2" height="1.5" fill="#C87840"/><path d="M0.8 5.5 Q1.5 0.8 4.8 0.8 Q8.2 0.8 8.8 5.5Z" fill="#F6B418"/><path d="M2.5 3.5 Q3.5 1.5 5.5 1.8" stroke="#FFE870" stroke-width="1.2" fill="none"/><path d="M0.3 5.8 h9" stroke="#6A4010" stroke-width="1"/></g></svg>
<div class="c n15 blue" style="left:212px;top:648px">Tâche</div>
<div class="c n15 blue" style="left:291px;top:648px">705040...</div>
<div class="c n15 blue" style="left:363px;top:648px;width:341px">Prise 10/16 A + T</div>
<div class="c n15 blue" style="left:708px;top:648px">U</div>
<div class="c n15 blue" style="left:740px;top:648px;width:46px;text-align:right">9,000</div>
<div class="c n15 gray" style="left:790px;top:648px;width:68px;text-align:right">28,45</div>
<div class="c n15 blue" style="left:862px;top:648px;width:70px;text-align:right">39,50</div>
<div class="c n15 blue" style="left:936px;top:648px;width:68px;text-align:right">355,50</div>
<div style="position:absolute;left:95px;top:666px;width:17px;height:18px;background:linear-gradient(180deg,#F7F5EF,#E7E0CF);border-left:1px solid #8D7563;border-bottom:1px solid #8D7563;border-right:1px solid #8D7563;box-shadow:inset 1px 1px 0 #FFFFFF, inset -1px 0 0 #FFFFFF;"></div>
<div style="position:absolute;left:134px;top:670px;width:11px;height:11px;border:1px solid #8D7563;border-radius:2px;background:linear-gradient(180deg,#FFFFFF,#E4DDCC);"></div><div style="position:absolute;left:137px;top:675px;width:5px;height:1px;background:#6A5848;"></div><div style="position:absolute;left:139px;top:673px;width:1px;height:5px;background:#6A5848;"></div>
<div style="position:absolute;left:146px;top:675px;width:1px;height:1px;background:#6A5848;"></div>
<div style="position:absolute;left:148px;top:666px;width:1px;height:18px;background:#E6E2D8;"></div>
<div class="c n15 blue" style="left:152px;top:666px">6</div>
<svg style="position:absolute;left:191px;top:667px" width="16" height="16" viewBox="0 0 16 16"><ellipse cx="11" cy="13" rx="5" ry="2.8" fill="#E4AC6A"/><ellipse cx="10.5" cy="12" rx="2" ry="1" fill="#F8D050"/><rect x="6" y="3" width="7.5" height="9.5" fill="#D8602E"/><rect x="6" y="3" width="7.5" height="2.5" fill="#F8C460"/><rect x="6" y="9" width="7.5" height="3" fill="#E0A030"/><path d="M15 4.5 L13.2 8.5" stroke="#2A2A2A" stroke-width="1.5"/><path d="M15.2 4 L14.6 5.3" stroke="#C03020" stroke-width="1.2"/><g transform="translate(0 0)"><path d="M0.5 16 Q0.5 10.5 5 10.5 Q9.5 10.5 9.5 16Z" fill="#1E34C0"/><path d="M1.5 15.5 Q2 12 5 11.5" stroke="#5A78F0" stroke-width="1" fill="none"/><path d="M1 16 h8" stroke="#0A1470" stroke-width="1.2"/><rect x="2.5" y="5.5" width="5" height="5" rx="1.5" fill="#E0A070"/><rect x="3" y="5.5" width="4" height="1.6" fill="#2A1A10"/><rect x="4" y="8.5" width="2" height="1.5" fill="#C87840"/><path d="M0.8 5.5 Q1.5 0.8 4.8 0.8 Q8.2 0.8 8.8 5.5Z" fill="#F6B418"/><path d="M2.5 3.5 Q3.5 1.5 5.5 1.8" stroke="#FFE870" stroke-width="1.2" fill="none"/><path d="M0.3 5.8 h9" stroke="#6A4010" stroke-width="1"/></g></svg>
<div class="c n15 blue" style="left:212px;top:666px">Tâche</div>
<div class="c n15 blue" style="left:291px;top:666px">709030...</div>
<div class="c n15 blue" style="left:363px;top:666px;width:341px">Pose et raccordement hotte</div>
<div class="c n15 blue" style="left:708px;top:666px">U</div>
<div class="c n15 blue" style="left:740px;top:666px;width:46px;text-align:right">1,000</div>
<div class="c n15 gray" style="left:790px;top:666px;width:68px;text-align:right">23,81</div>
<div class="c n15 blue" style="left:862px;top:666px;width:70px;text-align:right">30,95</div>
<div class="c n15 blue" style="left:936px;top:666px;width:68px;text-align:right">30,95</div>
<div style="position:absolute;left:95px;top:684px;width:17px;height:18px;background:linear-gradient(180deg,#F7F5EF,#E7E0CF);border-left:1px solid #8D7563;border-bottom:1px solid #8D7563;border-right:1px solid #8D7563;box-shadow:inset 1px 1px 0 #FFFFFF, inset -1px 0 0 #FFFFFF;"></div>
<div style="position:absolute;left:134px;top:688px;width:11px;height:11px;border:1px solid #8D7563;border-radius:2px;background:linear-gradient(180deg,#FFFFFF,#E4DDCC);"></div><div style="position:absolute;left:137px;top:693px;width:5px;height:1px;background:#6A5848;"></div><div style="position:absolute;left:139px;top:691px;width:1px;height:5px;background:#6A5848;"></div>
<div style="position:absolute;left:146px;top:693px;width:1px;height:1px;background:#6A5848;"></div>
<div style="position:absolute;left:148px;top:684px;width:1px;height:18px;background:#E6E2D8;"></div>
<div class="c n15 blue" style="left:152px;top:684px">7</div>
<svg style="position:absolute;left:191px;top:685px" width="16" height="16" viewBox="0 0 16 16"><ellipse cx="11" cy="13" rx="5" ry="2.8" fill="#E4AC6A"/><ellipse cx="10.5" cy="12" rx="2" ry="1" fill="#F8D050"/><rect x="6" y="3" width="7.5" height="9.5" fill="#D8602E"/><rect x="6" y="3" width="7.5" height="2.5" fill="#F8C460"/><rect x="6" y="9" width="7.5" height="3" fill="#E0A030"/><path d="M15 4.5 L13.2 8.5" stroke="#2A2A2A" stroke-width="1.5"/><path d="M15.2 4 L14.6 5.3" stroke="#C03020" stroke-width="1.2"/><g transform="translate(0 0)"><path d="M0.5 16 Q0.5 10.5 5 10.5 Q9.5 10.5 9.5 16Z" fill="#1E34C0"/><path d="M1.5 15.5 Q2 12 5 11.5" stroke="#5A78F0" stroke-width="1" fill="none"/><path d="M1 16 h8" stroke="#0A1470" stroke-width="1.2"/><rect x="2.5" y="5.5" width="5" height="5" rx="1.5" fill="#E0A070"/><rect x="3" y="5.5" width="4" height="1.6" fill="#2A1A10"/><rect x="4" y="8.5" width="2" height="1.5" fill="#C87840"/><path d="M0.8 5.5 Q1.5 0.8 4.8 0.8 Q8.2 0.8 8.8 5.5Z" fill="#F6B418"/><path d="M2.5 3.5 Q3.5 1.5 5.5 1.8" stroke="#FFE870" stroke-width="1.2" fill="none"/><path d="M0.3 5.8 h9" stroke="#6A4010" stroke-width="1"/></g></svg>
<div class="c n15 blue" style="left:212px;top:684px">Tâche</div>
<div class="c n15 blue" style="left:291px;top:684px">709030...</div>
<div class="c n15 blue" style="left:363px;top:684px;width:341px">Raccordement four et plaques de cuisson</div>
<div class="c n15 blue" style="left:708px;top:684px">U</div>
<div class="c n15 blue" style="left:740px;top:684px;width:46px;text-align:right">1,000</div>
<div class="c n15 gray" style="left:790px;top:684px;width:68px;text-align:right">23,81</div>
<div class="c n15 blue" style="left:862px;top:684px;width:70px;text-align:right">30,95</div>
<div class="c n15 blue" style="left:936px;top:684px;width:68px;text-align:right">30,95</div></div></div></div></body></html>
